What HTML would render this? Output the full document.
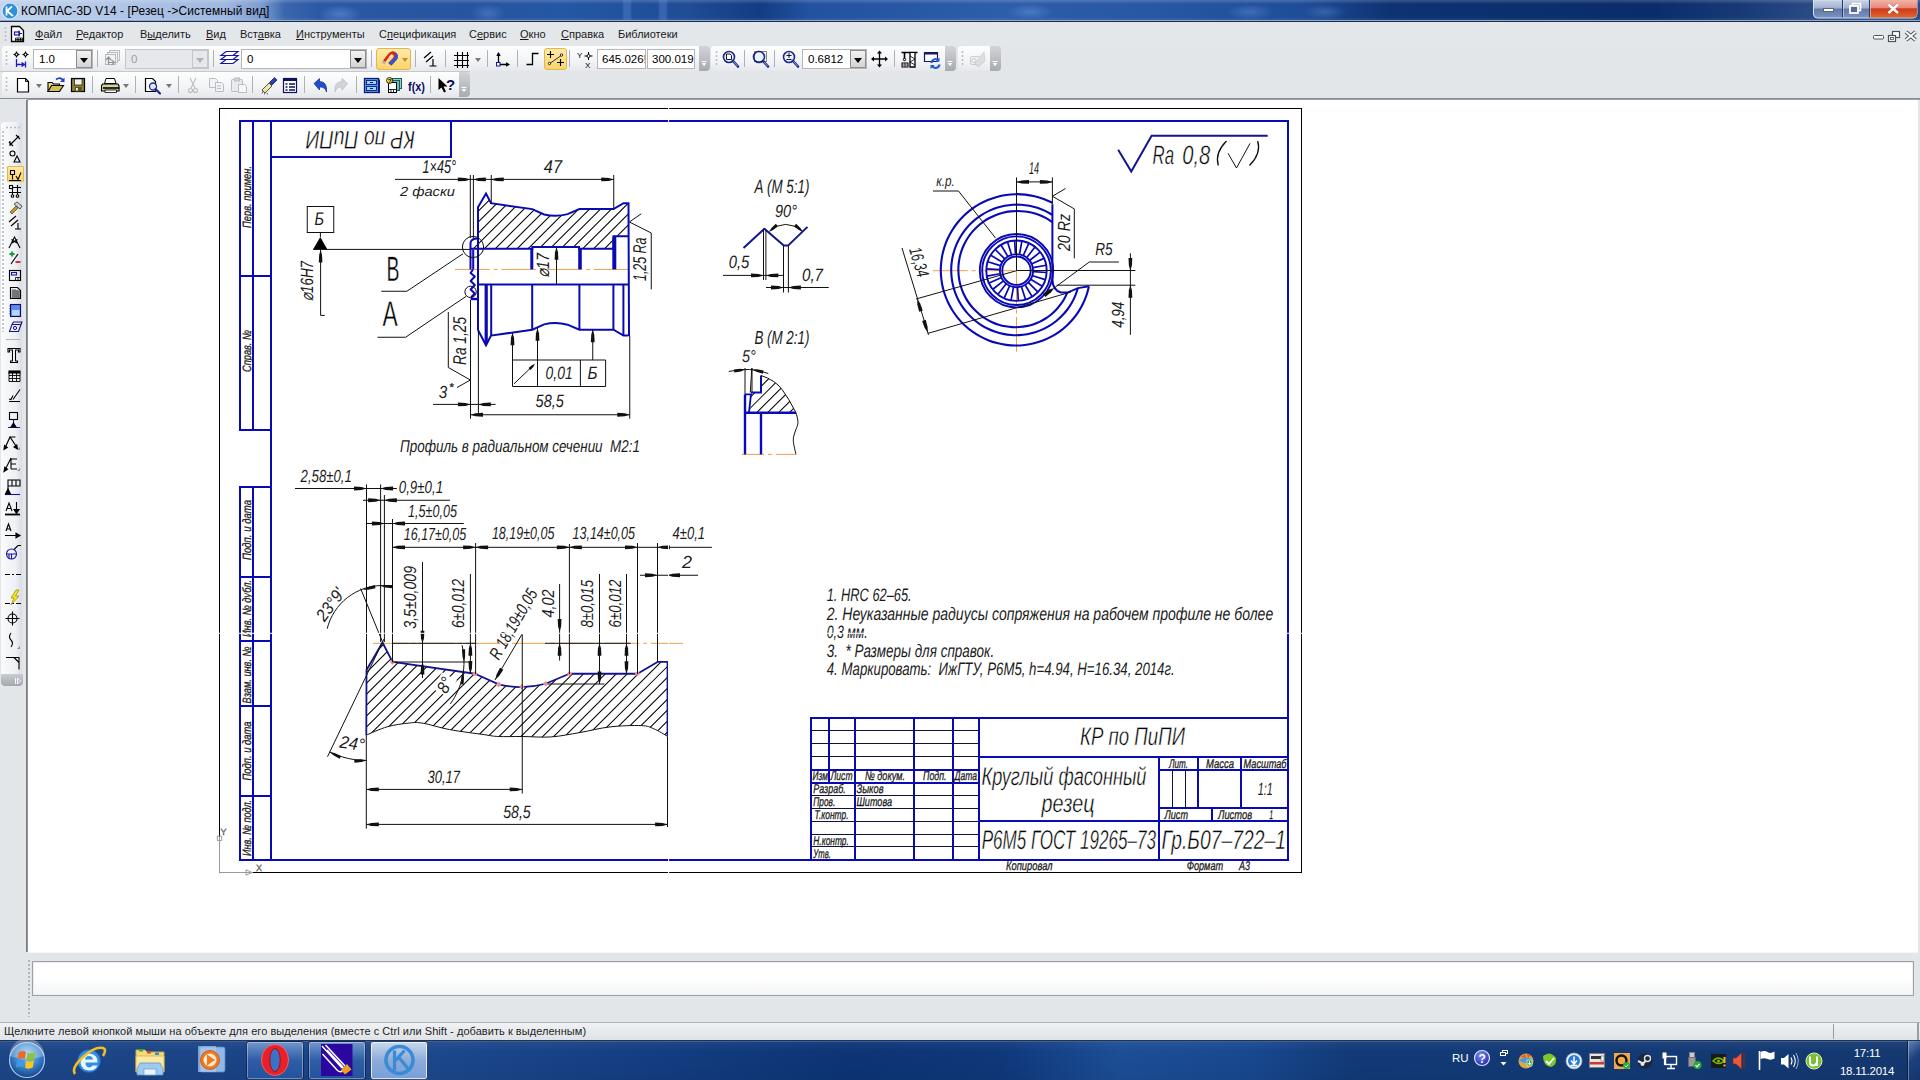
<!DOCTYPE html>
<html><head><meta charset="utf-8"><title>KOMPAS-3D V14</title>
<style>
*{box-sizing:border-box;margin:0;padding:0}
html,body{width:1920px;height:1080px;overflow:hidden;background:#e3e6e9;font-family:"Liberation Sans",sans-serif;font-size:11px;color:#000}
.abs{position:absolute}
#title{left:0;top:0;width:1920px;height:22px;background:linear-gradient(rgba(255,255,255,.18),rgba(255,255,255,0) 4px,rgba(255,255,255,0) 17px,rgba(255,255,255,.12)),linear-gradient(90deg,#c3d3ec 0px,#b4c8e8 100px,#9fb8e0 225px,#7d9cd0 262px,#3a66ad 285px,#2a58a3 320px,#27549f 480px,#2458a4 560px,#1f4c95 690px,#143c82 760px,#2252a0 810px,#2d5ea9 1000px,#2857a3 1150px,#1f4e98 1300px,#0e3272 1390px,#0a2c6a 1650px,#173a77 1740px,#2a4a84 1810px)}
#title:before{content:"";position:absolute;left:0;top:0;width:1920px;height:20px;background:radial-gradient(ellipse 22px 9px at 340px 14px,rgba(120,165,230,.45),transparent),radial-gradient(ellipse 18px 9px at 488px 13px,rgba(120,165,230,.35),transparent),linear-gradient(90deg,transparent 622px,rgba(110,150,220,.3) 624px,rgba(110,150,220,.3) 630px,transparent 632px,transparent 658px,rgba(110,150,220,.3) 660px,rgba(110,150,220,.3) 666px,transparent 668px),radial-gradient(ellipse 24px 8px at 1030px 12px,rgba(120,165,230,.4),transparent),radial-gradient(ellipse 24px 8px at 1250px 12px,rgba(120,165,230,.35),transparent),radial-gradient(ellipse 22px 8px at 1325px 12px,rgba(120,165,230,.3),transparent)}
#title:after{content:"";position:absolute;left:0;top:20px;width:1920px;height:2px;background:linear-gradient(#8fa8d0 50%,#1d2c48 50%)}
#ttext{left:21px;top:4px;font-size:11.9px;color:#000;white-space:nowrap;letter-spacing:0.1px}
#menubar{left:0;top:22px;width:1920px;height:24px;background:#e4e7ea}
.mi{top:28px;font-size:11px;color:#1a1a1a;white-space:nowrap}
.mi u{text-decoration:underline}
.tb{height:25px;background:linear-gradient(#fdfdfe,#f4f5f7 55%,#e6e8ec);border-radius:3px 0 0 3px}
.tbend{width:11px;height:25px;background:linear-gradient(#d2d4d8,#a7aaaf);border-radius:0 4px 4px 0}
.grip{width:3px;height:17px;background-image:radial-gradient(circle,#b9bcc2 0.9px,transparent 1.2px);background-size:3px 4px}
.sep{width:1px;height:17px;background:#aeb1b6}
.combo{height:20px;background:#fff;border:1px solid #b3b6bb;font-size:11.5px;line-height:18px;padding-left:5px;color:#000}
.combo.dis{background:#e6e8eb;color:#9a9da2;border-color:#c4c6ca}
.cbtn{width:16px;height:18px;right:0;top:0;background:linear-gradient(#f2f2f2,#d4d4d4);border:1px solid #8e8e8e}
.cbtn:after{content:"";position:absolute;left:3px;top:7px;border:4px solid transparent;border-top:5px solid #000;border-bottom:0}
.dis .cbtn{background:#e6e8eb;border-color:#c4c6ca}
.dis .cbtn:after{border-top-color:#b0b3b8}
.hl{background:linear-gradient(#fde9a8,#fbd56c);border:1px solid #e2b64e;border-radius:3px}
.dd{width:0;height:0;border:3px solid transparent;border-top:4px solid #777;border-bottom:0}
#left{left:0;top:99px;width:27px;height:851px;background:#e3e6e9}
#leftbar{left:1px;top:122px;width:21px;height:564px;background:linear-gradient(90deg,#fbfbfc,#eef0f3 70%,#d9dce1);border-radius:3px}
#canvas{left:28px;top:100px;width:1890px;height:852px;background:#fff}
#status{left:0;top:1022px;width:1920px;height:18px;background:linear-gradient(#f0f2f4,#dfe3e7);border-top:1px solid #aeb2b8}
#taskbar{left:0;top:1040px;width:1920px;height:40px;background:linear-gradient(rgba(255,255,255,.06),rgba(255,255,255,0) 12px,rgba(0,0,0,.05)),linear-gradient(90deg,#1c4688 0,#1a4488 250px,#1c488c 430px,#143e82 650px,#0c3476 850px,#0f387b 1000px,#1c4e96 1120px,#184890 1250px,#123a78 1350px,#133a76 1600px,#143870 1920px)}
#taskbar:before{content:"";position:absolute;left:0;top:0;width:1920px;height:2px;background:linear-gradient(#0e1f3c,#4d74ad)}
.tbtn{top:1041px;width:58px;height:39px;border-radius:3px;border:1px solid rgba(10,20,50,.7);box-shadow:inset 0 0 0 1px rgba(255,255,255,.35);background:linear-gradient(rgba(140,175,225,.75),rgba(60,110,185,.6) 50%,rgba(40,90,170,.7))}
.tray{color:#fff;font-size:12px}
svg{position:absolute;left:0;top:0;overflow:visible}
</style></head><body>
<div class="abs" id="title"></div>
<div class="abs" id="ttext">КОМПАС-3D V14 - [Резец -&gt;Системный вид]</div>
<div class="abs" id="menubar"></div>
<div class="abs mi" style="left:35px"><u>Ф</u>айл</div>
<div class="abs mi" style="left:76px"><u>Р</u>едактор</div>
<div class="abs mi" style="left:140px">В<u>ы</u>делить</div>
<div class="abs mi" style="left:206px"><u>В</u>ид</div>
<div class="abs mi" style="left:240px">Вст<u>а</u>вка</div>
<div class="abs mi" style="left:296px"><u>И</u>нструменты</div>
<div class="abs mi" style="left:379px">С<u>п</u>ецификация</div>
<div class="abs mi" style="left:469px">С<u>е</u>рвис</div>
<div class="abs mi" style="left:520px"><u>О</u>кно</div>
<div class="abs mi" style="left:561px"><u>С</u>правка</div>
<div class="abs mi" style="left:618px">Библиотеки</div>
<div class="abs grip" style="left:4px;top:26px;height:15px"></div>

<!-- toolbar row 1 -->
<div class="abs tb" style="left:2px;top:46px;width:697px"></div><div class="abs tbend" style="left:699px;top:46px"></div>
<div class="abs tb" style="left:711px;top:46px;width:235px"></div><div class="abs tbend" style="left:945px;top:46px"></div>
<div class="abs tb" style="left:958px;top:46px;width:33px"></div><div class="abs tbend" style="left:990px;top:46px"></div>
<div class="abs" style="left:0;top:71px;width:470px;height:1px;background:#c5c8cc"></div>
<div class="abs grip" style="left:5px;top:50px"></div>
<div class="abs grip" style="left:715px;top:50px"></div>
<div class="abs grip" style="left:961px;top:50px"></div>
<div class="abs combo" style="left:33px;top:49px;width:60px">1.0<div class="abs cbtn"></div></div>
<div class="abs sep" style="left:97px;top:50px"></div>
<div class="abs combo dis" style="left:125px;top:49px;width:84px">0<div class="abs cbtn"></div></div>
<div class="abs sep" style="left:213px;top:50px"></div>
<div class="abs combo" style="left:241px;top:49px;width:126px">0<div class="abs cbtn"></div></div>
<div class="abs sep" style="left:371px;top:50px"></div>
<div class="abs hl" style="left:376px;top:48px;width:35px;height:22px"></div>
<div class="abs dd" style="left:402px;top:58px;border-top-color:#c58a2a"></div>
<div class="abs sep" style="left:415px;top:50px"></div>
<div class="abs sep" style="left:445px;top:50px"></div>
<div class="abs dd" style="left:475px;top:58px"></div>
<div class="abs sep" style="left:487px;top:50px"></div>
<div class="abs sep" style="left:517px;top:50px"></div>
<div class="abs hl" style="left:544px;top:48px;width:23px;height:22px"></div>
<div class="abs sep" style="left:569px;top:50px"></div>
<div class="abs combo" style="left:597px;top:49px;width:49px;padding-left:4px;overflow:hidden">645.026!</div>
<div class="abs combo" style="left:647px;top:49px;width:48px;padding-left:4px">300.019</div>
<div class="abs sep" style="left:744px;top:50px"></div>
<div class="abs sep" style="left:774px;top:50px"></div>
<div class="abs combo" style="left:802px;top:49px;width:65px">0.6812<div class="abs cbtn"></div></div>
<div class="abs sep" style="left:894px;top:50px"></div>

<!-- toolbar row 2 -->
<div class="abs tb" style="left:2px;top:72px;width:457px"></div><div class="abs tbend" style="left:459px;top:72px"></div>
<div class="abs grip" style="left:5px;top:76px"></div>
<div class="abs dd" style="left:36px;top:84px"></div>
<div class="abs sep" style="left:92px;top:76px"></div>
<div class="abs dd" style="left:123px;top:84px"></div>
<div class="abs sep" style="left:135px;top:76px"></div>
<div class="abs dd" style="left:166px;top:84px"></div>
<div class="abs sep" style="left:178px;top:76px"></div>
<div class="abs sep" style="left:252px;top:76px"></div>
<div class="abs sep" style="left:304px;top:76px"></div>
<div class="abs sep" style="left:356px;top:76px"></div>
<div class="abs sep" style="left:430px;top:76px"></div>

<div class="abs" style="left:0;top:98px;width:1920px;height:2px;background:linear-gradient(#7f8286,#a5a8ac)"></div>
<div class="abs" id="left"></div>
<div class="abs" id="leftbar"></div>
<div class="abs" style="left:1px;top:674px;width:22px;height:12px;background:linear-gradient(#c9ccd0,#a4a7ac);border-radius:0 0 4px 4px"></div>
<div class="abs" style="left:5px;top:126px;width:15px;height:3px;background-image:radial-gradient(circle,#b9bcc2 0.9px,transparent 1.2px);background-size:4px 3px"></div>
<div class="abs" style="left:2px;top:130px;width:2px;height:202px;background-image:radial-gradient(circle,#c3c6cb 0.8px,transparent 1.1px);background-size:2px 4px"></div>
<div class="abs hl" style="left:7px;top:166px;width:17px;height:16px;border-radius:1px"></div>
<div class="abs" style="left:6px;top:339px;width:14px;height:1px;background:#aeb1b6"></div>
<div class="abs" style="left:26px;top:100px;width:2px;height:852px;background:linear-gradient(90deg,#6e7175,#9a9da1)"></div>
<div class="abs" id="canvas"></div>
<div class="abs" style="left:28px;top:952px;width:1890px;height:1px;background:#f4f5f6"></div>
<!-- property panel -->
<div class="abs" style="left:28px;top:959px;width:2px;height:58px;background-image:radial-gradient(circle,#b4b7bc 0.9px,transparent 1.2px);background-size:2px 4px"></div>
<div class="abs" style="left:32px;top:961px;width:1882px;height:35px;border:1px solid #9da1a7;box-shadow:inset 0 0 0 1px #eceef1;background:linear-gradient(#fff,#fff 50%,#f2f4f6)"></div>
<div class="abs" id="status"></div>
<div class="abs" style="left:4px;top:1025px;font-size:11px;color:#1e1e1e;white-space:nowrap;letter-spacing:0.05px" id="sttext">Щелкните левой кнопкой мыши на объекте для его выделения (вместе с Ctrl или Shift - добавить к выделенным)</div>
<div class="abs" style="left:1833px;top:1024px;width:1px;height:15px;background:#9a9ea4"></div>
<div class="abs" style="left:1917px;top:1023px;width:2px;height:17px;background:#9a9ea4"></div>
<!-- taskbar -->
<div class="abs" id="taskbar"></div>
<div class="abs tbtn" style="left:246px"></div>
<div class="abs tbtn" style="left:308px"></div>
<div class="abs tbtn" style="left:370px;background:linear-gradient(rgba(215,228,245,.92),rgba(160,190,230,.85) 50%,rgba(130,170,225,.9));box-shadow:inset 0 0 0 1px rgba(255,255,255,.7)"></div>
<div class="abs" style="left:1907px;top:1041px;width:13px;height:39px;border-left:1px solid #0c1f44;background:linear-gradient(135deg,rgba(160,185,225,.55),rgba(40,80,150,.4) 45%,rgba(20,50,110,.5));box-shadow:inset 1px 0 0 rgba(255,255,255,.35)"></div>
<div class="abs tray" style="left:1452px;top:1051.5px;font-size:11.5px">RU</div>
<div class="abs tray" style="left:1834px;top:1045px;width:66px;text-align:center;font-size:11.5px;line-height:17.5px;letter-spacing:-0.25px">17:11<br>18.11.2014</div>
<svg width="1920" height="1080" viewBox="0 0 1920 1080" id="sheet" text-rendering="geometricPrecision">
<rect x="219.5" y="108.5" width="1082" height="764" fill="#fff" stroke="#000" stroke-width="1"/>
<g stroke="#0a0ab4" stroke-width="2" fill="none" stroke-linecap="square">
<rect x="271" y="121" width="1017" height="739"/>
<path d="M240 121L271 121"/>
<path d="M240 276L271 276"/>
<path d="M240 430L271 430"/>
<path d="M240 121L240 430"/>
<path d="M253 121L253 430"/>
<path d="M240 487L271 487"/>
<path d="M240 577L271 577"/>
<path d="M240 641L271 641"/>
<path d="M240 706L271 706"/>
<path d="M240 796L271 796"/>
<path d="M240 860L271 860"/>
<path d="M240 487L240 860"/>
<path d="M253 487L253 860"/>
<path d="M451 121L451 157"/>
<path d="M271 157L451 157"/>
<path d="M811 718L1288 718"/>
<path d="M811 718L811 860"/>
<path d="M855 718L855 860"/>
<path d="M914 718L914 860"/>
<path d="M953 718L953 860"/>
<path d="M979 718L979 860"/>
<path d="M829 718L829 783"/>
<path d="M811 770L979 770"/>
<path d="M811 783L979 783"/>
<path d="M979 757L1288 757"/>
<path d="M979 821L1288 821"/>
<path d="M1159 757L1159 860"/>
<path d="M1159 770L1288 770"/>
<path d="M1159 808L1288 808"/>
<path d="M1198 757L1198 808"/>
<path d="M1241 757L1241 808"/>
<path d="M1212 808L1212 821"/>
</g>
<g stroke="#10103c" stroke-width="1" fill="none">
<path d="M811.5 730.5L978.5 730.5"/>
<path d="M811.5 743.5L978.5 743.5"/>
<path d="M811.5 756.5L978.5 756.5"/>
<path d="M811.5 795.5L978.5 795.5"/>
<path d="M811.5 808.5L978.5 808.5"/>
<path d="M811.5 821.5L978.5 821.5"/>
<path d="M811.5 834.5L978.5 834.5"/>
<path d="M811.5 846.5L978.5 846.5"/>
<path d="M1172.5 769.5L1172.5 808.5"/>
<path d="M1185.5 769.5L1185.5 808.5"/>
</g>
<g font-family="Liberation Sans" font-style="italic">
<text x="250.6" y="228" font-size="12.14" fill="#1c1c1c" font-style="italic" stroke="#1c1c1c" stroke-width="0.3" textLength="62" lengthAdjust="spacingAndGlyphs" transform="rotate(-90 250.6 228)">Перв. примен.</text>
<text x="250.6" y="372" font-size="12.14" fill="#1c1c1c" font-style="italic" stroke="#1c1c1c" stroke-width="0.3" textLength="42" lengthAdjust="spacingAndGlyphs" transform="rotate(-90 250.6 372)">Справ. №</text>
<text x="250.6" y="560" font-size="12.14" fill="#1c1c1c" font-style="italic" stroke="#1c1c1c" stroke-width="0.3" textLength="60" lengthAdjust="spacingAndGlyphs" transform="rotate(-90 250.6 560)">Подп. и дата</text>
<text x="250.6" y="637" font-size="12.14" fill="#1c1c1c" font-style="italic" stroke="#1c1c1c" stroke-width="0.3" textLength="57" lengthAdjust="spacingAndGlyphs" transform="rotate(-90 250.6 637)">Инв. № дубл.</text>
<text x="250.6" y="703.5" font-size="12.14" fill="#1c1c1c" font-style="italic" stroke="#1c1c1c" stroke-width="0.3" textLength="57" lengthAdjust="spacingAndGlyphs" transform="rotate(-90 250.6 703.5)">Взам. инв. №</text>
<text x="250.6" y="780.5" font-size="12.14" fill="#1c1c1c" font-style="italic" stroke="#1c1c1c" stroke-width="0.3" textLength="59" lengthAdjust="spacingAndGlyphs" transform="rotate(-90 250.6 780.5)">Подп. и дата</text>
<text x="250.6" y="856" font-size="12.14" fill="#1c1c1c" font-style="italic" stroke="#1c1c1c" stroke-width="0.3" textLength="56" lengthAdjust="spacingAndGlyphs" transform="rotate(-90 250.6 856)">Инв. № подл.</text>
<text x="415" y="130.5" font-size="25.71" fill="#000" font-style="italic" stroke="#fff" stroke-width="0.45" textLength="109" lengthAdjust="spacingAndGlyphs" transform="rotate(180 415 130.5)">КР по ПиПИ</text>
<text x="1080" y="745.4" font-size="25.71" fill="#000" font-style="italic" stroke="#fff" stroke-width="0.45" textLength="105" lengthAdjust="spacingAndGlyphs">КР по ПиПИ</text>
<text x="981.5" y="784.8" font-size="25.71" fill="#000" font-style="italic" stroke="#fff" stroke-width="0.45" textLength="165" lengthAdjust="spacingAndGlyphs">Круглый фасонный</text>
<text x="1041.5" y="811.5" font-size="25.71" fill="#000" font-style="italic" stroke="#fff" stroke-width="0.45" textLength="53" lengthAdjust="spacingAndGlyphs">резец</text>
<text x="981.7" y="848.5" font-size="27.14" fill="#000" font-style="italic" stroke="#fff" stroke-width="0.45" textLength="174.3" lengthAdjust="spacingAndGlyphs">Р6М5 ГОСТ 19265–73</text>
<text x="1161.5" y="848.5" font-size="27.14" fill="#000" font-style="italic" stroke="#fff" stroke-width="0.45" textLength="124.5" lengthAdjust="spacingAndGlyphs">Гр.Б07–722–1</text>
<text x="1257.8" y="794.6" font-size="17.86" fill="#1c1c1c" font-style="italic" textLength="15" lengthAdjust="spacingAndGlyphs">1:1</text>
<text x="1169" y="767.6" font-size="12.57" fill="#1c1c1c" font-style="italic" stroke="#1c1c1c" stroke-width="0.3" textLength="19" lengthAdjust="spacingAndGlyphs">Лит.</text>
<text x="1206" y="767.6" font-size="12.57" fill="#1c1c1c" font-style="italic" stroke="#1c1c1c" stroke-width="0.3" textLength="28" lengthAdjust="spacingAndGlyphs">Масса</text>
<text x="1243.5" y="767.6" font-size="12.57" fill="#1c1c1c" font-style="italic" stroke="#1c1c1c" stroke-width="0.3" textLength="43" lengthAdjust="spacingAndGlyphs">Масштаб</text>
<text x="1164.5" y="819" font-size="12.57" fill="#1c1c1c" font-style="italic" stroke="#1c1c1c" stroke-width="0.3" textLength="23.5" lengthAdjust="spacingAndGlyphs">Лист</text>
<text x="1218" y="819" font-size="12.57" fill="#1c1c1c" font-style="italic" stroke="#1c1c1c" stroke-width="0.3" textLength="34" lengthAdjust="spacingAndGlyphs">Листов</text>
<text x="1269.5" y="819" font-size="12.57" fill="#1c1c1c" font-style="italic" stroke="#1c1c1c" stroke-width="0.3" textLength="3.5" lengthAdjust="spacingAndGlyphs">1</text>
<text x="812.5" y="780.3" font-size="12.57" fill="#1c1c1c" font-style="italic" stroke="#1c1c1c" stroke-width="0.3" textLength="15.5" lengthAdjust="spacingAndGlyphs">Изм</text>
<text x="830.5" y="780.3" font-size="12.57" fill="#1c1c1c" font-style="italic" stroke="#1c1c1c" stroke-width="0.3" textLength="22" lengthAdjust="spacingAndGlyphs">Лист</text>
<text x="865" y="780.3" font-size="12.57" fill="#1c1c1c" font-style="italic" stroke="#1c1c1c" stroke-width="0.3" textLength="40" lengthAdjust="spacingAndGlyphs">№ докум.</text>
<text x="923" y="780.3" font-size="12.57" fill="#1c1c1c" font-style="italic" stroke="#1c1c1c" stroke-width="0.3" textLength="23.5" lengthAdjust="spacingAndGlyphs">Подп.</text>
<text x="954.5" y="780.3" font-size="12.57" fill="#1c1c1c" font-style="italic" stroke="#1c1c1c" stroke-width="0.3" textLength="22.5" lengthAdjust="spacingAndGlyphs">Дата</text>
<text x="813.3" y="793" font-size="12.57" fill="#1c1c1c" font-style="italic" stroke="#1c1c1c" stroke-width="0.3" textLength="32.5" lengthAdjust="spacingAndGlyphs">Разраб.</text>
<text x="856.5" y="793" font-size="12.57" fill="#1c1c1c" font-style="italic" stroke="#1c1c1c" stroke-width="0.3" textLength="27" lengthAdjust="spacingAndGlyphs">Зыков</text>
<text x="813.3" y="805.8" font-size="12.57" fill="#1c1c1c" font-style="italic" stroke="#1c1c1c" stroke-width="0.3" textLength="22" lengthAdjust="spacingAndGlyphs">Пров.</text>
<text x="856.5" y="805.8" font-size="12.57" fill="#1c1c1c" font-style="italic" stroke="#1c1c1c" stroke-width="0.3" textLength="35.5" lengthAdjust="spacingAndGlyphs">Шитова</text>
<text x="814.5" y="818.8" font-size="12.57" fill="#1c1c1c" font-style="italic" stroke="#1c1c1c" stroke-width="0.3" textLength="34" lengthAdjust="spacingAndGlyphs">Т.контр.</text>
<text x="813.3" y="844.8" font-size="12.57" fill="#1c1c1c" font-style="italic" stroke="#1c1c1c" stroke-width="0.3" textLength="35.5" lengthAdjust="spacingAndGlyphs">Н.контр.</text>
<text x="813.3" y="857.5" font-size="12.57" fill="#1c1c1c" font-style="italic" stroke="#1c1c1c" stroke-width="0.3" textLength="17.5" lengthAdjust="spacingAndGlyphs">Утв.</text>
<text x="1006" y="870.2" font-size="12.57" fill="#1c1c1c" font-style="italic" stroke="#1c1c1c" stroke-width="0.3" textLength="46.5" lengthAdjust="spacingAndGlyphs">Копировал</text>
<text x="1186.7" y="870.2" font-size="12.57" fill="#1c1c1c" font-style="italic" stroke="#1c1c1c" stroke-width="0.3" textLength="36.5" lengthAdjust="spacingAndGlyphs">Формат</text>
<text x="1239" y="870.2" font-size="12.57" fill="#1c1c1c" font-style="italic" stroke="#1c1c1c" stroke-width="0.3" textLength="11" lengthAdjust="spacingAndGlyphs">А3</text>
<text x="826.7" y="601" font-size="18" fill="#1c1c1c" font-style="italic" textLength="85" lengthAdjust="spacingAndGlyphs">1. HRC 62–65.</text>
<text x="826.7" y="619.6" font-size="18" fill="#1c1c1c" font-style="italic" textLength="446.5" lengthAdjust="spacingAndGlyphs">2. Неуказанные радиусы сопряжения на рабочем профиле не более</text>
<text x="826.7" y="638" font-size="18" fill="#1c1c1c" font-style="italic" textLength="41" lengthAdjust="spacingAndGlyphs">0,3 мм.</text>
<text x="826.7" y="656.5" font-size="18" fill="#1c1c1c" font-style="italic" textLength="167.5" lengthAdjust="spacingAndGlyphs">3.  * Размеры для справок.</text>
<text x="826.7" y="675" font-size="18" fill="#1c1c1c" font-style="italic" textLength="348" lengthAdjust="spacingAndGlyphs">4. Маркировать:  ИжГТУ, Р6М5, h=4.94, H=16.34, 2014г.</text>
</g>
<g font-family="Liberation Sans" font-style="italic" fill="none">
<clipPath id="hc1"><path d="M478 248.75L478 207.25L486 193.5L491 203.2L532.25 209.12L544.12 214.45A46.85 46.85 0 0 0 567.55 214.12L579.45 209.12L613.5 209.12L623.5 203.2L628.5 203.2L629 236.25L613.5 236.25L613.5 248.75L579 248.75L579 246.9L532.3 246.9L532.3 248.75z M470.5 249.5L470.5 243L473.5 239L478 238.5L478 249.5z"/></clipPath>
<g clip-path="url(#hc1)" stroke="#000" stroke-width="1.05">
<path d="M465 180.7L632 13.7M465 191.62L632 24.62M465 202.55L632 35.55M465 213.47L632 46.47M465 224.4L632 57.4M465 235.32L632 68.32M465 246.25L632 79.25M465 257.17L632 90.17M465 268.1L632 101.1M465 279.02L632 112.02M465 289.95L632 122.95M465 300.87L632 133.87M465 311.8L632 144.8M465 322.72L632 155.72M465 333.65L632 166.65M465 344.57L632 177.57M465 355.5L632 188.5M465 366.42L632 199.42M465 377.35L632 210.35M465 388.27L632 221.27M465 399.2L632 232.2M465 410.12L632 243.12"/></g>
<path d="M455 269.4L632 269.4" stroke="#e8a04a" stroke-width="1" stroke-dasharray="34.7 4 4 3.6"/>
<path d="M478 248.75L478 207.25L486 193.5L491 203.2L532.25 209.12L544.12 214.45A46.85 46.85 0 0 0 567.55 214.12L579.45 209.12L613.5 209.12L623.5 203.2L628.5 203.2L629 336" stroke="#0a0ab4" stroke-width="2" fill="none" stroke-linejoin="miter"/>
<path d="M470.5 248.75L532.3 248.75L532.3 246.9L579 246.9L579 248.75L613.5 248.75L613.5 236.25L629 236.25" stroke="#0a0ab4" stroke-width="2" fill="none" />
<path d="M478 207V330" stroke="#0a0ab4" stroke-width="2" fill="none" />
<path d="M478 284.4H629" stroke="#0a0ab4" stroke-width="2" fill="none" />
<path d="M531.8 248V269.4" stroke="#0a0ab4" stroke-width="3" fill="none" />
<path d="M580 248V269.4" stroke="#0a0ab4" stroke-width="3.6" fill="none" />
<path d="M614.3 237V269.4" stroke="#0a0ab4" stroke-width="4" fill="none" />
<path d="M470.5 269.4V243Q471 239.5 475 238.8L478 238.5" stroke="#0a0ab4" stroke-width="2" fill="none" />
<path d="M473.2 250V269.4" stroke="#0a0ab4" stroke-width="2" fill="none" />
<path d="M473 269.5L470.6 273L474.8 276.5L470.6 281L474.8 285L470.6 289.5L474.8 293.5L471 297.5" stroke="#0a0ab4" stroke-width="2" fill="none" stroke-linejoin="round"/>
<path d="M470.6 299H478" stroke="#0a0ab4" stroke-width="2.4" fill="none" />
<path d="M478 330L486 345.3L491 335.6L532.25 329.67L544.12 324.35A46.85 46.85 0 0 1 567.55 324.67L579.45 329.67L613.5 329.67L623.5 335.6L628.5 335.6" stroke="#0a0ab4" stroke-width="2" fill="none" stroke-linejoin="miter"/>
<path d="M486.2 284.4V344" stroke="#0a0ab4" stroke-width="3.2" fill="none" />
<path d="M491.2 284.4V335.600" stroke="#0a0ab4" stroke-width="2" fill="none" />
<path d="M532.2 284.4V329.700" stroke="#0a0ab4" stroke-width="2" fill="none" />
<path d="M579.4 284.4V329.700" stroke="#0a0ab4" stroke-width="2" fill="none" />
<path d="M613.4 284.4V329.700" stroke="#0a0ab4" stroke-width="2" fill="none" />
<path d="M623.4 284.4V335.600" stroke="#0a0ab4" stroke-width="2" fill="none" />
<circle cx="473" cy="247" r="10.6" stroke="#111"/><circle cx="470.6" cy="291.9" r="5.7" stroke="#111"/>
<path d="M395 179.4L613.75 179.4" stroke="#111" stroke-width="1" />
<path d="M470.3 175L470.3 238" stroke="#111" stroke-width="1" />
<path d="M473.4 175L473.4 238" stroke="#111" stroke-width="1" />
<path d="M491.25 175L491.25 204" stroke="#111" stroke-width="1" />
<path d="M613.75 175L613.75 209" stroke="#111" stroke-width="1" />
<path d="M470.3 179.4L465.3 177.88L457.8 177.5L457.8 181.3L465.3 180.92z" stroke="none" stroke-width="0" fill="#111" />
<path d="M473.4 179.4L478.4 180.92L485.9 181.3L485.9 177.5L478.4 177.88z" stroke="none" stroke-width="0" fill="#111" />
<path d="M491.25 179.4L496.25 180.92L503.75 181.3L503.75 177.5L496.25 177.88z" stroke="none" stroke-width="0" fill="#111" />
<path d="M613.75 179.4L608.75 177.88L601.25 177.5L601.25 181.3L608.75 180.92z" stroke="none" stroke-width="0" fill="#111" />
<text x="422.5" y="173" font-size="18.57" fill="#1c1c1c" font-style="italic" textLength="33.5" lengthAdjust="spacingAndGlyphs">1×45°</text>
<text x="400" y="196.2" font-size="13.29" fill="#1c1c1c" font-style="italic" textLength="55" lengthAdjust="spacingAndGlyphs">2 фаски</text>
<text x="543.8" y="173" font-size="18.57" fill="#1c1c1c" font-style="italic" textLength="18.2" lengthAdjust="spacingAndGlyphs">47</text>
<rect x="307.25" y="206.5" width="26.5" height="26" stroke="#111"/>
<text x="314.5" y="225.3" font-size="18.29" fill="#1c1c1c" font-style="italic" textLength="9.5" lengthAdjust="spacingAndGlyphs">Б</text>
<path d="M320.4 232.5L320.4 237" stroke="#111" stroke-width="1" />
<path d="M320.3 236.9L313 249.4L327.4 249.4z" stroke="none" stroke-width="0" fill="#000" />
<path d="M313 249.4L470 249.4" stroke="#111" stroke-width="1" />
<path d="M320.6 249.4V315.4H324.8" stroke="#111" stroke-width="1" fill="none" />
<path d="M320.6 250L319.16 255L318.8 262.5L322.4 262.5L322.04 255z" stroke="none" stroke-width="0" fill="#111" />
<text x="313" y="301" font-size="17.86" fill="#1c1c1c" font-style="italic" textLength="40" lengthAdjust="spacingAndGlyphs" transform="rotate(-90 313 301)">⌀16H7</text>
<text x="386.6" y="280.6" font-size="35.24" fill="#000" font-style="normal" stroke="#fff" stroke-width="0.45" textLength="13" lengthAdjust="spacingAndGlyphs">В</text>
<text x="382.6" y="326" font-size="35.52" fill="#000" font-style="normal" stroke="#fff" stroke-width="0.45" textLength="15.2" lengthAdjust="spacingAndGlyphs">А</text>
<path d="M463 253.75L406.9 291.25H381.25" stroke="#111" stroke-width="1" fill="none" />
<path d="M466.25 296.25L405.6 337.25H377.5" stroke="#111" stroke-width="1" fill="none" />
<path d="M556.5 247.5L556.5 284.4" stroke="#111" stroke-width="1" />
<path d="M556.5 247.3L554.98 252.3L554.6 259.8L558.4 259.8L558.02 252.3z" stroke="none" stroke-width="0" fill="#111" />
<text x="549" y="277.5" font-size="17.86" fill="#1c1c1c" font-style="italic" textLength="24.5" lengthAdjust="spacingAndGlyphs" transform="rotate(-90 549 277.5)">⌀17</text>
<path d="M641.25 213.75L629.4 222L651.25 233V289.4" stroke="#111" stroke-width="1" fill="none" />
<text x="646" y="281" font-size="18.57" fill="#1c1c1c" font-style="italic" textLength="43.5" lengthAdjust="spacingAndGlyphs" transform="rotate(-90 646 281)">1,25 Ra</text>
<path d="M470.5 300L470.5 418.75" stroke="#111" stroke-width="1" />
<path d="M478.4 331L478.4 413" stroke="#111" stroke-width="1" />
<path d="M629.75 336L629.75 418.75" stroke="#111" stroke-width="1" />
<path d="M433 404.4L495.6 404.4" stroke="#111" stroke-width="1" />
<path d="M470.5 404.4L465.5 402.88L458 402.5L458 406.3L465.5 405.92z" stroke="none" stroke-width="0" fill="#111" />
<path d="M478.4 404.4L483.4 405.92L490.9 406.3L490.9 402.5L483.4 402.88z" stroke="none" stroke-width="0" fill="#111" />
<path d="M470.5 414.75L629.75 414.75" stroke="#111" stroke-width="1" />
<path d="M470.5 414.75L475.5 416.27L483 416.65L483 412.85L475.5 413.23z" stroke="none" stroke-width="0" fill="#111" />
<path d="M629.75 414.75L624.75 413.23L617.25 412.85L617.25 416.65L624.75 416.27z" stroke="none" stroke-width="0" fill="#111" />
<text x="535.6" y="406.9" font-size="17.86" fill="#1c1c1c" font-style="italic" textLength="28.2" lengthAdjust="spacingAndGlyphs">58,5</text>
<text x="438.75" y="397.75" font-size="17.43" fill="#1c1c1c" font-style="italic" textLength="8.5" lengthAdjust="spacingAndGlyphs">3</text>
<text x="449" y="391" font-size="11.43" fill="#1c1c1c" font-style="italic" stroke="#1c1c1c" stroke-width="0.3" textLength="4.5" lengthAdjust="spacingAndGlyphs">*</text>
<path d="M448.3 312V367.5L470.4 380L457 387.5" stroke="#111" stroke-width="1" fill="none" />
<text x="466" y="365" font-size="18.57" fill="#1c1c1c" font-style="italic" textLength="48" lengthAdjust="spacingAndGlyphs" transform="rotate(-90 466 365)">Ra 1,25</text>
<path d="M512.5 360H605.6V386.5H512.5zM537.5 360V386.5M580.4 360V386.5" stroke="#111"/>
<path d="M514 383.75L534.4 364.4" stroke="#111" stroke-width="1" />
<path d="M534.6 364.2L531.8 365.31L528.56 368L530.49 370.03L533.34 366.94z" stroke="none" stroke-width="0" fill="#111" />
<text x="545.6" y="379.4" font-size="17.86" fill="#1c1c1c" font-style="italic" textLength="27" lengthAdjust="spacingAndGlyphs">0,01</text>
<text x="587.5" y="379.4" font-size="17.86" fill="#1c1c1c" font-style="italic" textLength="10" lengthAdjust="spacingAndGlyphs">Б</text>
<path d="M512.5 332.75L512.5 360" stroke="#111" stroke-width="1" />
<path d="M512.5 332.75L510.98 337.75L510.6 345.25L514.4 345.25L514.02 337.75z" stroke="none" stroke-width="0" fill="#111" />
<path d="M537.5 328.2L537.5 360" stroke="#111" stroke-width="1" />
<path d="M537.5 328.2L535.98 333.2L535.6 340.7L539.4 340.7L539.02 333.2z" stroke="none" stroke-width="0" fill="#111" />
<path d="M592.75 329.7L592.75 360" stroke="#111" stroke-width="1" />
<path d="M592.75 329.7L591.23 334.7L590.85 342.2L594.65 342.2L594.27 334.7z" stroke="none" stroke-width="0" fill="#111" />
<text x="400" y="451.9" font-size="17.14" fill="#1c1c1c" font-style="italic" textLength="240" lengthAdjust="spacingAndGlyphs">Профиль в радиальном сечении  М2:1</text>
<text x="754.4" y="193" font-size="19.14" fill="#1c1c1c" font-style="italic" textLength="55" lengthAdjust="spacingAndGlyphs">А (М 5:1)</text>
<text x="775" y="217" font-size="17.57" fill="#1c1c1c" font-style="italic" textLength="22" lengthAdjust="spacingAndGlyphs">90°</text>
<path d="M743.5 248L764.4 228.75L783.75 245.6H788L807.5 226.9" stroke="#14148c" stroke-width="2" fill="none" stroke-linejoin="round"/>
<path d="M763.5 229.5L763.5 280" stroke="#111" stroke-width="1" />
<path d="M765.9 230L765.9 280" stroke="#111" stroke-width="1" />
<path d="M783.5 246L783.5 292.5" stroke="#111" stroke-width="1" />
<path d="M788.4 246L788.4 292.5" stroke="#111" stroke-width="1" />
<path d="M723 275.4L783.5 275.4" stroke="#111" stroke-width="1" />
<path d="M763.5 275.4L758.5 273.88L751 273.5L751 277.3L758.5 276.92z" stroke="none" stroke-width="0" fill="#111" />
<path d="M765.9 275.4L770.9 276.92L778.4 277.3L778.4 273.5L770.9 273.88z" stroke="none" stroke-width="0" fill="#111" />
<path d="M766 287.5L828.75 287.5" stroke="#111" stroke-width="1" />
<path d="M783.5 287.5L778.5 285.98L771 285.6L771 289.4L778.5 289.02z" stroke="none" stroke-width="0" fill="#111" />
<path d="M788.4 287.5L793.4 289.02L800.9 289.4L800.9 285.6L793.4 285.98z" stroke="none" stroke-width="0" fill="#111" />
<text x="728.75" y="267.5" font-size="17.86" fill="#1c1c1c" font-style="italic" textLength="20.6" lengthAdjust="spacingAndGlyphs">0,5</text>
<text x="802" y="280.6" font-size="17.86" fill="#1c1c1c" font-style="italic" textLength="21" lengthAdjust="spacingAndGlyphs">0,7</text>
<path d="M769.4 231.25Q785.5 217.500 802.5 231.25" stroke="#111" stroke-width="1" fill="none" />
<path d="M769.2 231.5L773.09 229.91L777.89 226.3L775.83 223.85L771.44 227.95z" stroke="none" stroke-width="0" fill="#111" />
<path d="M802.7 231.5L800.46 227.95L796.07 223.85L794.01 226.3L798.81 229.91z" stroke="none" stroke-width="0" fill="#111" />
<text x="754.4" y="343.6" font-size="18.86" fill="#1c1c1c" font-style="italic" textLength="55" lengthAdjust="spacingAndGlyphs">В (М 2:1)</text>
<text x="742" y="362.4" font-size="17.14" fill="#1c1c1c" font-style="italic" textLength="13.8" lengthAdjust="spacingAndGlyphs">5°</text>
<clipPath id="hc2"><path d="M748.9 412.8L751 394.3L751 392.5L761 392.5L761 375.5Q775 380 782 389.4T796 412.8z"/></clipPath>
<g clip-path="url(#hc2)" stroke="#000" stroke-width="1.05">
<path d="M745 369.67L800 314.67M745 380.6L800 325.6M745 391.52L800 336.52M745 402.45L800 347.45M745 413.37L800 358.37M745 424.3L800 369.3M745 435.22L800 380.22M745 446.15L800 391.15M745 457.07L800 402.07M745 468L800 413"/></g>
<path d="M761 375.5Q775 380 782 389.4T796 412.8" stroke="#111" stroke-width="1" fill="none" />
<path d="M796 412.8C796.33 414.47 798.17 419.6 798 422.8C797.83 426 795.78 429 795 432C794.22 435 793.13 437.07 793.3 440.8C793.47 444.53 795.55 452.13 796 454.4" stroke="#111" stroke-width="1" fill="none" />
<path d="M742 454.4L796 454.4" stroke="#e8a04a" stroke-width="1" stroke-dasharray="22 4 4 4"/>
<path d="M745 394.3V454.4" stroke="#0a0ab4" stroke-width="2.4" fill="none" />
<path d="M745 412.8H796" stroke="#0a0ab4" stroke-width="2.4" fill="none" />
<path d="M761 375.5V392.5H751" stroke="#0a0ab4" stroke-width="2" fill="none" />
<path d="M761 412.8V454.4" stroke="#0a0ab4" stroke-width="2.4" fill="none" />
<path d="M745 394.3H751L748.9 412.8" stroke="#0a0ab4" stroke-width="1.8" fill="none" />
<path d="M745 368L745 394" stroke="#111" stroke-width="1" />
<path d="M752 368L752 392" stroke="#111" stroke-width="1" />
<path d="M751.8 368L750.3 392.5" stroke="#111" stroke-width="1" />
<path d="M728.75 371.500Q750 366.500 768.3 373.500" stroke="#111" stroke-width="1" fill="none" />
<path d="M745 369.5L740.46 368.84L733.88 369.45L734.33 372.62L740.82 371.38z" stroke="none" stroke-width="0" fill="#111" />
<path d="M752.5 369.5L756.46 371.81L762.79 373.71L763.56 370.61L757.08 369.32z" stroke="none" stroke-width="0" fill="#111" />
<path d="M933 270.7L1016.5 270.7" stroke="#e8a04a" stroke-width="1" stroke-dasharray="34.7 4 4 3.6"/>
<path d="M1016.5 270.7L1016.5 353" stroke="#e8a04a" stroke-width="1" stroke-dasharray="34.7 4 4 3.6"/>
<path d="M1052.44 202.83C1050.98 202.18 1046.68 200.05 1043.7 198.95C1040.71 197.84 1037.64 196.92 1034.55 196.19C1031.45 195.46 1028.29 194.93 1025.13 194.59C1021.98 194.26 1018.78 194.12 1015.61 194.18C1012.43 194.23 1009.24 194.49 1006.11 194.95C1002.97 195.4 999.84 196.05 996.79 196.89C993.73 197.73 990.71 198.77 987.79 199.98C984.86 201.19 982 202.59 979.25 204.16C976.5 205.72 973.83 207.47 971.3 209.36C968.78 211.25 966.35 213.31 964.07 215.5C961.8 217.69 959.65 220.04 957.67 222.49C955.69 224.95 953.85 227.54 952.19 230.22C950.53 232.9 949.03 235.7 947.72 238.56C946.41 241.42 945.26 244.38 944.32 247.38C943.37 250.38 942.61 253.46 942.05 256.55C941.48 259.64 941.11 262.79 940.93 265.92C940.76 269.05 940.78 272.22 940.99 275.35C941.21 278.48 941.62 281.61 942.22 284.69C942.82 287.76 943.62 290.82 944.6 293.79C945.58 296.77 946.75 299.7 948.09 302.53C949.43 305.35 950.96 308.11 952.64 310.75C954.32 313.38 956.17 315.93 958.16 318.34C960.16 320.74 962.31 323.04 964.59 325.17C966.86 327.31 969.28 329.31 971.8 331.15C974.32 332.98 976.97 334.67 979.7 336.18C982.42 337.69 985.26 339.03 988.15 340.18C991.04 341.34 994.02 342.32 997.03 343.1C1000.03 343.89 1003.11 344.49 1006.19 344.9C1009.27 345.3 1012.4 345.52 1015.5 345.54C1018.6 345.56 1021.73 345.38 1024.8 345.01C1027.88 344.65 1030.96 344.08 1033.96 343.34C1036.97 342.59 1039.95 341.65 1042.83 340.54C1045.72 339.43 1048.56 338.13 1051.28 336.66C1054.01 335.2 1056.66 333.56 1059.18 331.77C1061.69 329.98 1064.12 328.03 1066.39 325.94C1068.67 323.86 1070.83 321.61 1072.82 319.27C1074.82 316.92 1076.68 314.42 1078.37 311.85C1080.06 309.27 1081.59 306.57 1082.94 303.81C1084.3 301.04 1085.48 298.17 1086.48 295.27C1087.48 292.36 1088.52 287.84 1088.93 286.36" stroke="#0a0ab4" stroke-width="2.1" fill="none" />
<path d="M1052.37 214.82C1051.16 214.16 1047.59 212.01 1045.09 210.84C1042.59 209.67 1039.99 208.65 1037.37 207.8C1034.74 206.95 1032.05 206.27 1029.34 205.75C1026.63 205.24 1023.87 204.89 1021.13 204.72C1018.38 204.55 1015.6 204.55 1012.85 204.73C1010.11 204.9 1007.36 205.25 1004.66 205.76C1001.96 206.27 999.27 206.96 996.66 207.81C994.05 208.66 991.47 209.67 988.99 210.84C986.51 212 984.08 213.33 981.77 214.8C979.45 216.26 977.21 217.88 975.1 219.62C972.99 221.36 970.97 223.25 969.09 225.23C967.22 227.22 965.45 229.34 963.84 231.55C962.23 233.75 960.74 236.08 959.42 238.46C958.1 240.85 956.92 243.34 955.9 245.87C954.89 248.4 954.03 251.01 953.34 253.64C952.65 256.28 952.12 258.97 951.77 261.67C951.41 264.37 951.23 267.11 951.21 269.83C951.2 272.54 951.35 275.28 951.68 277.98C952 280.67 952.5 283.37 953.16 286C953.81 288.63 954.64 291.24 955.62 293.76C956.6 296.29 957.75 298.77 959.04 301.15C960.32 303.54 961.77 305.85 963.34 308.05C964.91 310.25 966.64 312.37 968.47 314.35C970.3 316.34 972.27 318.22 974.34 319.96C976.4 321.7 978.59 323.32 980.85 324.79C983.12 326.25 985.49 327.58 987.91 328.75C990.34 329.92 992.86 330.95 995.41 331.81C997.96 332.66 1000.58 333.37 1003.22 333.9C1005.85 334.43 1008.54 334.8 1011.22 335C1013.89 335.2 1016.6 335.23 1019.28 335.09C1021.96 334.95 1024.65 334.64 1027.29 334.17C1029.93 333.7 1032.56 333.06 1035.11 332.27C1037.67 331.47 1040.19 330.51 1042.63 329.4C1045.06 328.3 1047.44 327.03 1049.72 325.63C1051.99 324.23 1054.2 322.67 1056.28 321C1058.36 319.33 1060.35 317.51 1062.2 315.59C1064.05 313.68 1065.8 311.63 1067.39 309.5C1068.99 307.36 1070.47 305.12 1071.78 302.81C1073.1 300.49 1074.28 298.08 1075.3 295.63C1076.32 293.17 1077.46 289.33 1077.89 288.07" stroke="#0a0ab4" stroke-width="2.1" fill="none" />
<path d="M1052.43 222.15C1051.37 221.49 1048.28 219.38 1046.11 218.2C1043.93 217.02 1041.66 215.97 1039.36 215.07C1037.06 214.17 1034.69 213.41 1032.3 212.8C1029.91 212.19 1027.46 211.73 1025.02 211.42C1022.58 211.11 1020.1 210.95 1017.65 210.95C1015.19 210.94 1012.72 211.09 1010.29 211.39C1007.85 211.69 1005.43 212.14 1003.05 212.73C1000.68 213.33 998.33 214.07 996.05 214.95C993.78 215.83 991.54 216.86 989.4 218.01C987.25 219.16 985.16 220.45 983.18 221.86C981.2 223.26 979.29 224.8 977.5 226.43C975.71 228.07 974.01 229.82 972.44 231.66C970.86 233.5 969.4 235.45 968.07 237.46C966.73 239.48 965.52 241.59 964.45 243.74C963.38 245.9 962.44 248.14 961.65 250.41C960.85 252.68 960.19 255.01 959.69 257.35C959.18 259.7 958.82 262.09 958.6 264.47C958.39 266.85 958.32 269.27 958.4 271.65C958.48 274.04 958.72 276.44 959.09 278.79C959.46 281.14 959.99 283.49 960.65 285.77C961.31 288.05 962.11 290.31 963.05 292.49C963.98 294.67 965.06 296.81 966.25 298.85C967.45 300.89 968.78 302.88 970.21 304.75C971.64 306.63 973.2 308.43 974.85 310.11C976.5 311.79 978.27 313.38 980.11 314.85C981.95 316.31 983.89 317.67 985.9 318.89C987.9 320.11 989.99 321.21 992.12 322.18C994.26 323.14 996.46 323.98 998.69 324.67C1000.92 325.36 1003.21 325.92 1005.51 326.33C1007.8 326.74 1010.13 327.01 1012.46 327.13C1014.78 327.25 1017.12 327.23 1019.43 327.07C1021.75 326.91 1024.07 326.6 1026.34 326.15C1028.61 325.71 1030.87 325.12 1033.06 324.4C1035.25 323.68 1037.42 322.81 1039.5 321.83C1041.58 320.85 1043.62 319.73 1045.56 318.5C1047.5 317.27 1049.38 315.91 1051.15 314.45C1052.92 312.99 1054.61 311.42 1056.19 309.76C1057.76 308.1 1059.24 306.33 1060.6 304.49C1061.95 302.65 1063.2 300.72 1064.32 298.73C1065.43 296.75 1066.79 293.6 1067.29 292.57" stroke="#0a0ab4" stroke-width="2.1" fill="none" />
<circle cx="1016.5" cy="270.7" r="36.7" stroke="#0a0ab4" stroke-width="1.9"/>
<circle cx="1016.5" cy="270.7" r="34.3" stroke="#0a0ab4" stroke-width="1.9"/>
<circle cx="1016.5" cy="270.7" r="30.2" stroke="#0a0ab4" stroke-width="1.9"/>
<circle cx="1016.5" cy="270.7" r="16.6" stroke="#0a0ab4" stroke-width="1.9"/>
<circle cx="1016.5" cy="270.7" r="14.2" stroke="#0a0ab4" stroke-width="1.9"/>
<path d="M1033.47 271.72L1046.45 272.5M1032.73 275.75L1045.15 279.61M1031.05 279.49L1042.18 286.21M1028.53 282.72L1037.72 291.9M1025.3 285.24L1032.03 296.37M1021.56 286.93L1025.44 299.34M1017.53 287.67L1018.32 300.64M1013.44 287.42L1011.1 300.21M1009.53 286.21L1004.2 298.06M1006.02 284.09L998.01 294.32M1003.12 281.19L992.89 289.21M1001 277.68L989.15 283.02M999.78 273.77L986.99 276.12M999.53 269.68L986.55 268.9M1000.27 265.65L987.85 261.79M1001.95 261.91L990.82 255.19M1004.47 258.68L995.28 249.5M1007.7 256.16L1000.97 245.03M1011.44 254.47L1007.56 242.06M1015.47 253.73L1014.68 240.76M1019.56 253.98L1021.9 241.19M1023.47 255.19L1028.8 243.34M1026.98 257.31L1034.99 247.08M1029.88 260.21L1040.11 252.19M1032 263.72L1043.85 258.38M1033.22 267.63L1046.01 265.28" stroke="#0a0ab4" stroke-width="1.7" fill="none" />
<path d="M1052.4 204.3V279Q1052.6 290.500 1061 292.4L1067.4 292.6L1078 288.1L1089 286.3" stroke="#0a0ab4" stroke-width="2" fill="none" />
<path d="M1016.5 177.4L1016.5 270.7" stroke="#111" stroke-width="1" />
<path d="M1052.4 177.4L1052.4 204" stroke="#111" stroke-width="1" />
<path d="M1016.5 270.5L1135.4 270.5" stroke="#111" stroke-width="1" />
<path d="M1056.7 285.2L1135.4 285.2" stroke="#111" stroke-width="1" />
<path d="M1016.5 181.9L1052.4 181.9" stroke="#111" stroke-width="1" />
<path d="M1016.5 181.9L1021.5 183.42L1029 183.8L1029 180L1021.5 180.38z" stroke="none" stroke-width="0" fill="#111" />
<path d="M1052.4 181.9L1047.4 180.38L1039.9 180L1039.9 183.8L1047.4 183.42z" stroke="none" stroke-width="0" fill="#111" />
<text x="1029" y="174" font-size="17.14" fill="#1c1c1c" font-style="italic" textLength="10" lengthAdjust="spacingAndGlyphs">14</text>
<text x="936.3" y="186.3" font-size="14.71" fill="#1c1c1c" font-style="italic" textLength="18.5" lengthAdjust="spacingAndGlyphs">к.р.</text>
<path d="M933 191H958.5L995.5 238" stroke="#111" stroke-width="1" fill="none" />
<path d="M1065.5 188.5L1052.4 196.3L1074.3 208.9V258.3" stroke="#111" stroke-width="1" fill="none" />
<text x="1069.6" y="251" font-size="17.57" fill="#1c1c1c" font-style="italic" textLength="37" lengthAdjust="spacingAndGlyphs" transform="rotate(-90 1069.6 251)">20 Rz</text>
<text x="1095.3" y="254.5" font-size="17.57" fill="#1c1c1c" font-style="italic" textLength="17.3" lengthAdjust="spacingAndGlyphs">R5</text>
<path d="M1118.9 262H1089.3L1054 288.1" stroke="#111" stroke-width="1" fill="none" />
<path d="M1054.2 287.9L1049.23 289.59L1042.96 293.73L1045.34 296.94L1051.13 292.16z" stroke="none" stroke-width="0" fill="#111" />
<path d="M1130.4 253.3L1130.4 334.8" stroke="#111" stroke-width="1" />
<path d="M1130.4 270.5L1131.92 265.5L1132.3 258L1128.5 258L1128.88 265.5z" stroke="none" stroke-width="0" fill="#111" />
<path d="M1130.4 285.2L1128.88 290.2L1128.5 297.7L1132.3 297.7L1131.92 290.2z" stroke="none" stroke-width="0" fill="#111" />
<text x="1124.3" y="327.8" font-size="17.57" fill="#1c1c1c" font-style="italic" textLength="26" lengthAdjust="spacingAndGlyphs" transform="rotate(-90 1124.3 327.8)">4,94</text>
<path d="M902 248L928.5 334.8" stroke="#111" stroke-width="1" />
<path d="M916 299L1016.5 270.7" stroke="#111" stroke-width="1" />
<path d="M927.8 333.4L1071 292" stroke="#111" stroke-width="1" />
<path d="M917.3 299.2L917.3 304.43L919.13 311.71L922.76 310.6L920.21 303.54z" stroke="none" stroke-width="0" fill="#111" />
<path d="M927.6 332.3L927.6 327.07L925.77 319.79L922.14 320.9L924.69 327.96z" stroke="none" stroke-width="0" fill="#111" />
<text x="908.9" y="249.4" font-size="17.57" fill="#1c1c1c" font-style="italic" textLength="30" lengthAdjust="spacingAndGlyphs" transform="rotate(73.05 908.9 249.4)">16,34</text>
<path d="M1118.2 149.7L1131.25 171.6L1151.6 135.8H1267.7" stroke="#14148c" stroke-width="2" fill="none" />
<text x="1152.6" y="163.75" font-size="26.43" fill="#000" font-style="italic" stroke="#fff" stroke-width="0.45" textLength="21.5" lengthAdjust="spacingAndGlyphs">Ra</text>
<text x="1182.3" y="163.75" font-size="26.43" fill="#000" font-style="italic" stroke="#fff" stroke-width="0.45" textLength="28" lengthAdjust="spacingAndGlyphs">0,8</text>
<path d="M1226.5 141Q1214.500 153 1218.300 165.500" stroke="#111" stroke-width="1.3" fill="none" />
<path d="M1257.700 141Q1261.500 153.500 1249.500 165.500" stroke="#111" stroke-width="1.3" fill="none" />
<path d="M1228 153.3L1236.5 168L1250 143.4" stroke="#111" stroke-width="1" fill="none" />
<clipPath id="hc3"><path d="M366.5 670L382.5 642.5L392.5 661.9L475 673.75L498.75 684.4A93.7 93.7 0 0 0 545.6 683.75L569.4 673.75L637.5 673.75L657.5 661.9L667.5 661.9L667.5 736.25C665.21 735 658.12 730.52 653.75 728.75C649.38 726.98 648.54 725.91 641.25 725.6C633.96 725.29 620.21 725.75 610 726.9C599.79 728.05 589.79 730.83 580 732.5C570.21 734.17 560.92 736.23 551.25 736.9C541.58 737.57 530.83 736.57 522 736.5C513.17 736.43 504.57 736.8 498.3 736.5C492.03 736.2 492.5 735.85 484.4 734.7C476.3 733.55 459.88 731.5 449.7 729.6C439.52 727.7 430.02 724.4 423.3 723.3C416.58 722.2 415.42 722.42 409.4 723C403.38 723.58 394.38 724.78 387.2 726.8C380.02 728.82 369.78 733.72 366.3 735.1z"/></clipPath>
<g clip-path="url(#hc3)" stroke="#000" stroke-width="1.05">
<path d="M364 631.2L670 325.2M364 642.12L670 336.12M364 653.05L670 347.05M364 663.97L670 357.97M364 674.9L670 368.9M364 685.82L670 379.82M364 696.75L670 390.75M364 707.67L670 401.67M364 718.6L670 412.6M364 729.52L670 423.52M364 740.45L670 434.45M364 751.37L670 445.37M364 762.3L670 456.3M364 773.22L670 467.22M364 784.15L670 478.15M364 795.07L670 489.07M364 806L670 500M364 816.92L670 510.92M364 827.85L670 521.85M364 838.77L670 532.77M364 849.7L670 543.7M364 860.62L670 554.62M364 871.55L670 565.55M364 882.47L670 576.47M364 893.4L670 587.4M364 904.32L670 598.32M364 915.25L670 609.25M364 926.17L670 620.17M364 937.1L670 631.1M364 948.02L670 642.02M364 958.95L670 652.95M364 969.87L670 663.87M364 980.8L670 674.8M364 991.72L670 685.72M364 1002.65L670 696.65M364 1013.57L670 707.57M364 1024.5L670 718.5M364 1035.42L670 729.42"/></g>
<path d="M366.3 735.1C369.78 733.72 380.02 728.82 387.2 726.8C394.38 724.78 403.38 723.58 409.4 723C415.42 722.42 416.58 722.2 423.3 723.3C430.02 724.4 439.52 727.7 449.7 729.6C459.88 731.5 476.3 733.55 484.4 734.7C492.5 735.85 492.03 736.2 498.3 736.5C504.57 736.8 513.17 736.43 522 736.5C530.83 736.57 541.58 737.57 551.25 736.9C560.92 736.23 570.21 734.17 580 732.5C589.79 730.83 599.79 728.05 610 726.9C620.21 725.75 633.96 725.29 641.25 725.6C648.54 725.91 649.38 726.98 653.75 728.75C658.12 730.52 665.21 735 667.5 736.25" stroke="#111" stroke-width="1" fill="none" />
<path d="M373 643.3L683 643.3" stroke="#e8a04a" stroke-width="1" stroke-dasharray="34.7 4 4 3.6"/>
<path d="M366.3 735.1L366.5 670L382.5 642.5L392.5 661.9L475 673.75L498.75 684.4A93.7 93.7 0 0 0 545.6 683.75L569.4 673.75L637.5 673.75L657.5 661.9L667.5 661.9L667.5 736.25" stroke="#14148c" stroke-width="1.8" fill="none" stroke-linejoin="round"/>
<rect x="390.5" y="659.9" width="4" height="4" fill="#e8909c" stroke="none" transform="rotate(45 392.5 661.9)"/>
<rect x="473" y="671.75" width="4" height="4" fill="#e8909c" stroke="none" transform="rotate(45 475 673.75)"/>
<rect x="496.75" y="682.4" width="4" height="4" fill="#e8909c" stroke="none" transform="rotate(45 498.75 684.4)"/>
<rect x="519.9" y="684.9" width="4" height="4" fill="#e8909c" stroke="none" transform="rotate(45 521.9 686.9)"/>
<rect x="543.6" y="681.75" width="4" height="4" fill="#e8909c" stroke="none" transform="rotate(45 545.6 683.75)"/>
<rect x="567.4" y="671.75" width="4" height="4" fill="#e8909c" stroke="none" transform="rotate(45 569.4 673.75)"/>
<rect x="635.5" y="671.75" width="4" height="4" fill="#e8909c" stroke="none" transform="rotate(45 637.5 673.75)"/>
<path d="M392.5 643.3L475.6 643.3" stroke="#111" stroke-width="1" />
<path d="M545 643.3L630.6 643.3" stroke="#111" stroke-width="1" />
<path d="M392.5 662L471.9 662" stroke="#111" stroke-width="1" />
<path d="M547.5 684L604.4 684" stroke="#111" stroke-width="1" />
<path d="M295 488.5L396.9 488.5" stroke="#111" stroke-width="1" />
<path d="M366.5 488.5L361.5 486.98L354 486.6L354 490.4L361.5 490.02z" stroke="none" stroke-width="0" fill="#111" />
<path d="M380.6 488.5L385.6 490.02L393.1 490.4L393.1 486.6L385.6 486.98z" stroke="none" stroke-width="0" fill="#111" />
<path d="M363 500.25L450 500.25" stroke="#111" stroke-width="1" />
<path d="M380.6 500.25L375.6 498.73L368.1 498.35L368.1 502.15L375.6 501.77z" stroke="none" stroke-width="0" fill="#111" />
<path d="M384.4 500.25L389.4 501.77L396.9 502.15L396.9 498.35L389.4 498.73z" stroke="none" stroke-width="0" fill="#111" />
<path d="M366.5 523.5L463.75 523.5" stroke="#111" stroke-width="1" />
<path d="M384.4 523.5L379.4 521.98L371.9 521.6L371.9 525.4L379.4 525.02z" stroke="none" stroke-width="0" fill="#111" />
<path d="M392.5 523.5L397.5 525.02L405 525.4L405 521.6L397.5 521.98z" stroke="none" stroke-width="0" fill="#111" />
<path d="M392.5 547.3L711.9 547.3" stroke="#111" stroke-width="1" />
<path d="M392.5 547.3L397.5 548.82L405 549.2L405 545.4L397.5 545.78z" stroke="none" stroke-width="0" fill="#111" />
<path d="M475.6 547.3L470.6 545.78L463.1 545.4L463.1 549.2L470.6 548.82z" stroke="none" stroke-width="0" fill="#111" />
<path d="M475.6 547.3L480.6 548.82L488.1 549.2L488.1 545.4L480.6 545.78z" stroke="none" stroke-width="0" fill="#111" />
<path d="M569.4 547.3L564.4 545.78L556.9 545.4L556.9 549.2L564.4 548.82z" stroke="none" stroke-width="0" fill="#111" />
<path d="M569.4 547.3L574.4 548.82L581.9 549.2L581.9 545.4L574.4 545.78z" stroke="none" stroke-width="0" fill="#111" />
<path d="M637.5 547.3L632.5 545.78L625 545.4L625 549.2L632.5 548.82z" stroke="none" stroke-width="0" fill="#111" />
<path d="M657.5 547.3L662.5 548.82L670 549.2L670 545.4L662.5 545.78z" stroke="none" stroke-width="0" fill="#111" />
<path d="M640 575.25L698 575.25" stroke="#111" stroke-width="1" />
<path d="M657.5 575.25L652.5 573.73L645 573.35L645 577.15L652.5 576.77z" stroke="none" stroke-width="0" fill="#111" />
<path d="M667.5 575.25L672.5 576.77L680 577.15L680 573.35L672.5 573.73z" stroke="none" stroke-width="0" fill="#111" />
<path d="M366.5 484.4L366.5 670" stroke="#111" stroke-width="1" />
<path d="M380.6 484.4L380.6 642" stroke="#111" stroke-width="1" />
<path d="M384.4 495L384.4 642" stroke="#111" stroke-width="1" />
<path d="M392.5 519L392.5 662" stroke="#111" stroke-width="1" />
<path d="M475.6 543L475.6 674" stroke="#111" stroke-width="1" />
<path d="M569.4 544L569.4 674" stroke="#111" stroke-width="1" />
<path d="M637.5 543L637.5 674" stroke="#111" stroke-width="1" />
<path d="M657.5 543L657.5 662" stroke="#111" stroke-width="1" />
<text x="300.6" y="481.5" font-size="17.43" fill="#1c1c1c" font-style="italic" textLength="51.3" lengthAdjust="spacingAndGlyphs">2,58±0,1</text>
<text x="398.75" y="492.5" font-size="17.43" fill="#1c1c1c" font-style="italic" textLength="44.3" lengthAdjust="spacingAndGlyphs">0,9±0,1</text>
<text x="408" y="516.9" font-size="17.43" fill="#1c1c1c" font-style="italic" textLength="49" lengthAdjust="spacingAndGlyphs">1,5±0,05</text>
<text x="403.75" y="540" font-size="17.43" fill="#1c1c1c" font-style="italic" textLength="62.5" lengthAdjust="spacingAndGlyphs">16,17±0,05</text>
<text x="491.9" y="539.4" font-size="17.43" fill="#1c1c1c" font-style="italic" textLength="62.5" lengthAdjust="spacingAndGlyphs">18,19±0,05</text>
<text x="572.5" y="539.4" font-size="17.43" fill="#1c1c1c" font-style="italic" textLength="62.5" lengthAdjust="spacingAndGlyphs">13,14±0,05</text>
<text x="672.5" y="539.4" font-size="17.43" fill="#1c1c1c" font-style="italic" textLength="32.5" lengthAdjust="spacingAndGlyphs">4±0,1</text>
<text x="681.9" y="567.5" font-size="17.43" fill="#1c1c1c" font-style="italic" textLength="10" lengthAdjust="spacingAndGlyphs">2</text>
<text x="416.25" y="628.75" font-size="17.43" fill="#1c1c1c" font-style="italic" textLength="62.75" lengthAdjust="spacingAndGlyphs" transform="rotate(-90 416.25 628.75)">3,5±0,009</text>
<text x="463.75" y="628" font-size="17.43" fill="#1c1c1c" font-style="italic" textLength="49" lengthAdjust="spacingAndGlyphs" transform="rotate(-90 463.75 628)">6±0,012</text>
<text x="553.75" y="617.5" font-size="17.43" fill="#1c1c1c" font-style="italic" textLength="28" lengthAdjust="spacingAndGlyphs" transform="rotate(-90 553.75 617.5)">4,02</text>
<text x="593" y="627.5" font-size="17.43" fill="#1c1c1c" font-style="italic" textLength="47.5" lengthAdjust="spacingAndGlyphs" transform="rotate(-90 593 627.5)">8±0,015</text>
<text x="620.6" y="627.5" font-size="17.43" fill="#1c1c1c" font-style="italic" textLength="48" lengthAdjust="spacingAndGlyphs" transform="rotate(-90 620.6 627.5)">6±0,012</text>
<text x="498.8" y="660.7" font-size="17.43" fill="#1c1c1c" font-style="italic" textLength="78" lengthAdjust="spacingAndGlyphs" transform="rotate(-59.8 498.8 660.7)">R 18,19±0,05</text>
<text x="324.5" y="622.5" font-size="17.43" fill="#1c1c1c" font-style="italic" textLength="36" lengthAdjust="spacingAndGlyphs" transform="rotate(-54 324.5 622.5)">23°9'</text>
<rect x="445" y="680" width="19" height="17" fill="#fff" transform="rotate(-62 446.5 694.5)"/>
<text x="446.5" y="694.5" font-size="17.43" fill="#1c1c1c" font-style="italic" textLength="15" lengthAdjust="spacingAndGlyphs" transform="rotate(-62 446.5 694.5)">8°</text>
<text x="339" y="747.5" font-size="17.43" fill="#1c1c1c" font-style="italic" textLength="25" lengthAdjust="spacingAndGlyphs" transform="rotate(8 339 747.5)">24°</text>
<path d="M422.5 562L422.5 678" stroke="#111" stroke-width="1" />
<path d="M422.5 643.3L424.02 638.3L424.4 630.8L420.6 630.8L420.98 638.3z" stroke="none" stroke-width="0" fill="#111" />
<path d="M422.5 662L420.98 667L420.6 674.5L424.4 674.5L424.02 667z" stroke="none" stroke-width="0" fill="#111" />
<path d="M470.4 574L470.4 673.5" stroke="#111" stroke-width="1" />
<path d="M470.4 643.3L468.88 648.3L468.5 655.8L472.3 655.8L471.92 648.3z" stroke="none" stroke-width="0" fill="#111" />
<path d="M470.4 673.5L471.92 668.5L472.3 661L468.5 661L468.88 668.5z" stroke="none" stroke-width="0" fill="#111" />
<path d="M559.6 584L559.6 660.6" stroke="#111" stroke-width="1" />
<path d="M559.6 631.5L561.12 626.5L561.5 619L557.7 619L558.08 626.5z" stroke="none" stroke-width="0" fill="#111" />
<path d="M559.6 643.3L558.08 648.3L557.7 655.8L561.5 655.8L561.12 648.3z" stroke="none" stroke-width="0" fill="#111" />
<path d="M599.5 574L599.5 684" stroke="#111" stroke-width="1" />
<path d="M599.5 643.3L597.98 648.3L597.6 655.8L601.4 655.8L601.02 648.3z" stroke="none" stroke-width="0" fill="#111" />
<path d="M599.5 684L601.02 679L601.4 671.5L597.6 671.5L597.98 679z" stroke="none" stroke-width="0" fill="#111" />
<path d="M626.5 574L626.5 673.75" stroke="#111" stroke-width="1" />
<path d="M626.5 643.3L624.98 648.3L624.6 655.8L628.4 655.8L628.02 648.3z" stroke="none" stroke-width="0" fill="#111" />
<path d="M626.5 673.75L628.02 668.75L628.4 661.25L624.6 661.25L624.98 668.75z" stroke="none" stroke-width="0" fill="#111" />
<path d="M521.9 634.4L495 680" stroke="#111" stroke-width="1" />
<path d="M495.3 679.5L499.15 675.96L503.28 669.69L500.01 667.77L496.53 674.42z" stroke="none" stroke-width="0" fill="#111" />
<path d="M522.25 634.4L522.25 793.5" stroke="#111" stroke-width="1" />
<path d="M462.02 645.21L462.82 648.99L463.42 652.8L463.81 656.64L463.99 660.5L463.96 664.36L463.72 668.21L463.28 672.04L462.63 675.85L461.77 679.61L460.71 683.33L459.46 686.98L458.01 690.55L456.37 694.05L454.54 697.45L452.53 700.74L450.34 703.93" stroke="#111" stroke-width="1" fill="none" />
<path d="M464 661.9L465.1 656.86L465.16 649.35L461.96 649.46L462.55 656.95z" stroke="none" stroke-width="0" fill="#111" />
<path d="M463.3 672L461.5 676.84L460.4 684.26L463.58 684.6L464.05 677.11z" stroke="none" stroke-width="0" fill="#111" />
<path d="M360.6 588.5L382.5 641.9" stroke="#111" stroke-width="1" />
<path d="M327.19 628.71L328.52 624.18L330.23 619.77L332.29 615.52L334.7 611.46L337.43 607.6L340.48 603.99L343.81 600.64L347.41 597.58L351.25 594.83L355.3 592.41L359.54 590.33L363.94 588.61L368.47 587.25L373.09 586.28L377.78 585.7L382.5 585.5L392 586" stroke="#111" stroke-width="1" fill="none" />
<path d="M363 589.7L368.16 589.73L375.52 588.23L374.74 585.12L367.54 587.25z" stroke="none" stroke-width="0" fill="#111" />
<path d="M380.6 586L385.33 587.53L392.5 588.23L392.67 585.03L385.46 584.97z" stroke="none" stroke-width="0" fill="#111" />
<path d="M384 639L327.5 756.7" stroke="#111" stroke-width="1" />
<path d="M366.3 760.4L363.91 760.37L361.52 760.26L359.14 760.1L356.76 759.86L354.39 759.55L352.02 759.18L349.67 758.74L347.34 758.24L345.01 757.67L342.71 757.03L340.42 756.33L338.16 755.56L335.92 754.73L333.7 753.84L331.51 752.89L329.35 751.87" stroke="#111" stroke-width="1" fill="none" />
<path d="M329.7 752L333.4 755.32L339.67 758.87L341.12 756.02L334.56 753.04z" stroke="none" stroke-width="0" fill="#111" />
<path d="M366.3 760.4L361.44 759.37L354.23 759.43L354.4 762.63L361.57 761.93z" stroke="none" stroke-width="0" fill="#111" />
<path d="M366.3 735L366.3 828.6" stroke="#111" stroke-width="1" />
<path d="M667.5 736.5L667.5 827" stroke="#111" stroke-width="1" />
<path d="M366.3 789.4L522.2 789.4" stroke="#111" stroke-width="1" />
<path d="M366.3 789.4L371.3 790.92L378.8 791.3L378.8 787.5L371.3 787.88z" stroke="none" stroke-width="0" fill="#111" />
<path d="M522.2 789.4L517.2 787.88L509.7 787.5L509.7 791.3L517.2 790.92z" stroke="none" stroke-width="0" fill="#111" />
<path d="M366.3 824.4L667.6 824.4" stroke="#111" stroke-width="1" />
<path d="M366.3 824.4L371.3 825.92L378.8 826.3L378.8 822.5L371.3 822.88z" stroke="none" stroke-width="0" fill="#111" />
<path d="M667.6 824.4L662.6 822.88L655.1 822.5L655.1 826.3L662.6 825.92z" stroke="none" stroke-width="0" fill="#111" />
<text x="427.5" y="782.8" font-size="17.86" fill="#1c1c1c" font-style="italic" textLength="32.5" lengthAdjust="spacingAndGlyphs">30,17</text>
<text x="503.2" y="817.8" font-size="17.86" fill="#1c1c1c" font-style="italic" textLength="27.5" lengthAdjust="spacingAndGlyphs">58,5</text>
<path d="M219.5 837V873.4M219.5 872.5H253M217.300 840.500h4.400v-4.400h-4.400zM246 869.800l6 2.700-6 2.700z" stroke="#9a9a9a" stroke-width="1" fill="none" />
<text x="220.5" y="835" font-size="9" fill="#9a9a9a" font-style="normal" stroke="#1c1c1c" stroke-width="0.3">Y</text>
<text x="256" y="870.5" font-size="9" fill="#9a9a9a" font-style="normal" stroke="#1c1c1c" stroke-width="0.3">X</text>
<path d="M219 633.3L1302 633.3" stroke="#fff" stroke-width="1" />
<path d="M668.6 108L668.6 873" stroke="#fff" stroke-width="1" />
</g>
</svg>
<svg width="1920" height="1080" viewBox="0 0 1920 1080" shape-rendering="auto" id="icons">
<defs>
<linearGradient id="gClose" x1="0" y1="0" x2="0" y2="1"><stop offset="0" stop-color="#f3b3a6"/><stop offset=".45" stop-color="#e8887a"/><stop offset=".5" stop-color="#cf3a1c"/><stop offset="1" stop-color="#e0662a"/></linearGradient>
<linearGradient id="gBtn" x1="0" y1="0" x2="0" y2="1"><stop offset="0" stop-color="#c9d3e6"/><stop offset=".45" stop-color="#9fb0cf"/><stop offset=".5" stop-color="#6079a8"/><stop offset="1" stop-color="#7a93c0"/></linearGradient>
<radialGradient id="gOrb" cx=".5" cy=".35" r=".7"><stop offset="0" stop-color="#9fd0f5"/><stop offset=".5" stop-color="#3a86d0"/><stop offset="1" stop-color="#123a7c"/></radialGradient>
<radialGradient id="gHelp" cx=".4" cy=".3" r=".8"><stop offset="0" stop-color="#7a8cf0"/><stop offset="1" stop-color="#1a23a8"/></radialGradient>
<g id="mag"><circle cx="0" cy="0" r="5.500" fill="#eaf2ff" stroke="#1b2a8c" stroke-width="1.600"/><path d="M4 4l5 5.500" stroke="#1b2a8c" stroke-width="2.600" stroke-linecap="round"/><path d="M4.500 4.500l4 4.500" stroke="#8fa4e8" stroke-width="1"/></g>
</defs>
<!-- title icon -->
<circle cx="10" cy="11" r="8" fill="#2f8fd8" stroke="#d8ecfb" stroke-width="1.2"/>
<path d="M6.5 6.5v9M7 11l5-4.5M7 11l6 5" stroke="#fff" stroke-width="1.8" fill="none"/>
<!-- window buttons -->
<path d="M1813.5 0v14q0 4 4 4h95.5q4 0 4-4V0z" fill="url(#gBtn)" stroke="#d9e2f2" stroke-width="1"/>
<path d="M1870 0h47v14q0 3.500 -3.500 3.500H1870z" fill="url(#gClose)"/>
<path d="M1842.500 0v17.500M1869.500 0v17.500" stroke="#2b3c5e" stroke-width="1"/>
<path d="M1843.500 0v17.500M1870.500 0v17.500" stroke="#d9e2f2" stroke-width=".8" opacity=".7"/>
<rect x="1823.500" y="8.500" width="10" height="3" fill="#fff" stroke="#46526e" stroke-width=".8"/>
<rect x="1852.500" y="3.500" width="8" height="7" fill="none" stroke="#fff" stroke-width="1.6"/>
<rect x="1850" y="6" width="8" height="7" fill="#59688a" stroke="#fff" stroke-width="1.800"/>
<path d="M1888.500 4.500l9.500 8.500M1898 4.500l-9.500 8.500" stroke="#8a2a18" stroke-width="3.600" opacity=".5"/><path d="M1888.500 4.500l9.500 8.500M1898 4.500l-9.500 8.500" stroke="#fff" stroke-width="2.600"/>
<!-- MDI buttons -->
<rect x="1873.500" y="35.500" width="10" height="3.500" rx="1" fill="#fff" stroke="#4a4f5c"/>
<rect x="1892.500" y="31.500" width="7" height="6" fill="#fff" stroke="#4a4f5c" stroke-width="1.200"/>
<rect x="1888.500" y="35.500" width="7" height="6" fill="#fff" stroke="#4a4f5c" stroke-width="1.200"/>
<rect x="1890.500" y="37.500" width="3" height="2" fill="#fff" stroke="#4a4f5c" stroke-width=".8"/>
<path d="M1906 32l9.500 8M1915.500 32l-9.500 8" stroke="#4a4f5c" stroke-width="3.800"/>
<path d="M1906 32l9.500 8M1915.500 32l-9.500 8" stroke="#fff" stroke-width="1.800"/>
<!-- menu doc icon -->
<path d="M11.500 26.500h8l4 4v11h-12z" fill="#fff" stroke="#000" stroke-width="1.300"/>
<rect x="14.500" y="32" width="5" height="3" fill="#fff" stroke="#1616a8" stroke-width="1.200"/>
<path d="M19 30.500v6M20 33.500h2" stroke="#1616a8" stroke-width="1.200"/>
<path d="M15.500 38h7v3h-7zM18 38v3M20.500 38v3M15.500 39.500h7" stroke="#000" stroke-width=".8" fill="none"/>
<!-- row1 icons -->
<g stroke="#000" stroke-width="1.200" fill="none">
<path d="M13.500 54.500h6M16.500 51.500v6M22.500 54.500h6M25.500 51.500v6"/><circle cx="16.500" cy="54.500" r="1.500" fill="#fff"/><circle cx="25.500" cy="54.500" r="1.500" fill="#fff"/>
</g>
<path d="M16.500 59v8M16.500 64.500h8M25.500 61.500v6M21.500 62.500l3 2-3 2" stroke="#1b1bc0" stroke-width="1.300" fill="none"/>
<g stroke="#b8bbc0" fill="#f2f3f5" stroke-width="1"><rect x="109.500" y="50.500" width="10" height="10"/><rect x="107.500" y="52.500" width="10" height="10"/><rect x="105.500" y="54.500" width="10" height="10"/></g>
<path d="M108.500 65v-7M106 60l2.500-3 2.500 3M108.500 62.500h5M111.500 60l3 2.500-3 2.500" stroke="#8e9298" stroke-width="1.200" fill="none"/>
<g stroke="#1414a0" stroke-width="1.200" fill="#fff"><path d="M221 63.500l5-4h12l-5 4z"/><path d="M221 59.500l5-4h12l-5 4z"/><path d="M221 55.500l5-4h12l-5 4z"/></g>
<!-- magnet -->
<path d="M383 60.500l6-7.500q4-3.500 7.500 0 3 3.500 0 7l-5 5.500-3.200-2.500 5-5.500q1-1.800-.3-2.800-1.400-.9-2.700.4l-5 7z" fill="#d6241c"/>
<path d="M391.300 65.500l5.200-5.500q3-3.500 0-7l-2.200 1.500q1.500 2 .2 3.600l-6.200 5z" fill="#2d56d8"/>
<path d="M383 60.500l3 2.300-1.500 1.800-3-2.200z" fill="#b5b5b5"/>
<!-- parallel/perp -->
<path d="M424 58l7-6M426 62l7-6M433 59v7M429.500 66h7" stroke="#000" stroke-width="1.200" fill="none"/>
<!-- grid -->
<path d="M454 55.500h15M454 60.500h15M454 65.500h15M457.500 52v16M462.500 52v16M467.500 52v16" stroke="#000" stroke-width="1.100"/>
<!-- axes -->
<path d="M498.500 53v11.500M498.500 64.500h10" stroke="#000" stroke-width="1.300"/><path d="M498.500 52l-2.200 4h4.400zM510 64.500l-4-2.200v4.400z" fill="#000"/><rect x="496.500" y="62.500" width="3.500" height="3.500" fill="#fff" stroke="#1414a0"/>
<!-- step -->
<path d="M526.500 64.500h6v-11h6" stroke="#000" stroke-width="1.300" fill="none"/>
<!-- ortho highlighted -->
<path d="M549 64l13-9" stroke="#333" stroke-width="1"/><path d="M550.500 51v7M547 54.500h7M560.500 59v7M557 62.500h7" stroke="#000" stroke-width="1.100"/><circle cx="549.500" cy="63.500" r="1.200" fill="#fff" stroke="#000" stroke-width=".8"/><circle cx="561.500" cy="55" r="1.200" fill="#fff" stroke="#000" stroke-width=".8"/>
<!-- YX -->
<text x="577" y="58" font-size="8" font-family="Liberation Sans" fill="#000">Y</text><text x="585" y="68" font-size="8" font-family="Liberation Sans" fill="#000">X</text>
<path d="M588.500 52v8M584.500 56h8" stroke="#000" stroke-width="1.100"/><circle cx="588.500" cy="56" r="1.500" fill="#fff" stroke="#000" stroke-width=".9"/>
<!-- zoom icons -->

<use href="#mag" x="729" y="57"/><path d="M726.500 54h3.500l1.500 1.500v4h-5z" fill="#fff" stroke="#000" stroke-width=".9"/>
<use href="#mag" x="759" y="57"/><rect x="754.500" y="51.500" width="12" height="10" fill="none" stroke="#000" stroke-width=".9" stroke-dasharray="1 1"/>
<use href="#mag" x="789" y="57"/><path d="M786.500 55.500h5M789 53v5M786.500 59.500h5" stroke="#000" stroke-width=".9"/>
<!-- move -->
<path d="M879.500 52v14M872.500 59h14" stroke="#000" stroke-width="1.300"/><path d="M879.500 50.500l-2.500 3h5zM879.500 67.500l-2.500-3h5zM871 59l3-2.500v5zM888 59l-3-2.500v5z" fill="#000"/>
<!-- crane -->
<path d="M901.500 52.500h16M904.500 52.500v6" stroke="#000" stroke-width="1.600" fill="none"/><path d="M910 53v14h5v-14" fill="#fff" stroke="#000" stroke-width="1.300"/><path d="M910 56l5 3-5 3 5 3" stroke="#000" stroke-width=".8" fill="none"/><circle cx="904.500" cy="59.500" r="1.200" fill="none" stroke="#000"/><rect x="902" y="63" width="6" height="4" fill="#fff" stroke="#000" stroke-width="1"/><path d="M905 63v4M902 65h6" stroke="#000" stroke-width=".7"/>
<!-- refresh window -->
<path d="M924.500 52.500h13v9h-13z" fill="#fff" stroke="#16166a" stroke-width="1.200"/><rect x="924" y="52" width="14" height="2.500" fill="#16166a"/>
<path d="M931.500 63a4 4 0 0 1 7-2.500M939.500 64.500a4 4 0 0 1-7 2" stroke="#1f5ad0" stroke-width="2" fill="none"/><path d="M939.500 57.500v4h-4zM930.500 69v-4h4z" fill="#1f5ad0"/>
<!-- tb3 disabled icon -->
<g opacity=".55"><rect x="970.500" y="56.500" width="9" height="8" rx="1.500" fill="#eef0f3" stroke="#a9adb3"/><path d="M975 63l9-11 1 9-7 6z" fill="#c9ccd1" stroke="#a9adb3" stroke-width=".8"/><circle cx="974" cy="60.500" r="2" fill="none" stroke="#a9adb3"/></g>
<!-- small expand marks on tbends -->
<g stroke="#fff" stroke-width="1" fill="none"><path d="M701.500 61.500h5M702.500 63.500l1.500 2 1.500-2z" fill="#fff"/><path d="M947.500 61.500h5M948.500 63.500l1.500 2 1.500-2z" fill="#fff"/><path d="M992.500 61.500h5M993.500 63.500l1.500 2 1.500-2z" fill="#fff"/><path d="M461.500 87.500h5M462.500 89.500l1.500 2 1.500-2z" fill="#fff"/></g>
<!-- row2 icons -->
<path d="M17.500 78.500h8l3 3v10.500h-11z" fill="#fff" stroke="#000" stroke-width="1.200"/><path d="M25.500 78.500v3h3" fill="none" stroke="#000" stroke-width=".9"/>
<path d="M48 91.500v-9h4l1.500 1.500h6v7.500z" fill="#e8dc78" stroke="#000" stroke-width="1.100"/><path d="M48 91.500l3.500-6h12l-4 6z" fill="#cfc24e" stroke="#000" stroke-width="1.100"/><path d="M56 79.500q4-3 7 .5" stroke="#1d3fc4" stroke-width="1.600" fill="none"/><path d="M64.500 77.500v4.500h-4.500z" fill="#1d3fc4"/>
<rect x="71.500" y="78.500" width="13" height="13" fill="#8a8230" stroke="#000" stroke-width="1.200"/><rect x="74.500" y="79" width="7.500" height="6" fill="#f2f2ea" stroke="#000" stroke-width=".6"/><rect x="75" y="87" width="6.500" height="4.500" fill="#5a5420"/><rect x="76" y="88" width="1.800" height="2.500" fill="#fff"/>
<path d="M106 78.500h8.500l1.500 5h-11.500z" fill="#fff" stroke="#000" stroke-width="1"/><path d="M102.500 84h15.500l1 2v5h-17.500v-5z" fill="#d4d0a0" stroke="#000" stroke-width="1.100"/><path d="M103 88h16.500" stroke="#000" stroke-width="1.600"/><rect x="105" y="90" width="11.500" height="2.500" fill="#fff" stroke="#000" stroke-width=".8"/>
<path d="M145.500 78.500h7l3 3v10h-10z" fill="#fff" stroke="#000" stroke-width="1.200"/><circle cx="153" cy="86.500" r="3.500" fill="#dce8ff" stroke="#1b2a8c" stroke-width="1.300"/><path d="M155.500 89l4.500 4.500" stroke="#1b2a8c" stroke-width="2.200" stroke-linecap="round"/>
<g stroke="#b9bcc1" fill="none" stroke-width="1.100"><path d="M190 78l5 10M196 78l-5 10"/><circle cx="190.500" cy="90.500" r="2"/><circle cx="195.500" cy="90.500" r="2"/></g>
<g stroke="#b9bcc1" fill="#f1f2f4" stroke-width="1"><path d="M209.500 78.500h6l2 2v7h-8z"/><path d="M215.500 82.500h6l2 2v7h-8z"/><path d="M217 86h4M217 88.500h4" /></g>
<g stroke="#b9bcc1" fill="#e9eaed" stroke-width="1"><rect x="231.500" y="79.500" width="11" height="12" rx="1"/><rect x="234.500" y="78" width="5" height="3" fill="#d4d6da"/><path d="M238.500 84.500h6l2 2v6h-8z" fill="#f6f6f8"/></g>
<path d="M262 90l7-7 3 3-7 7z" fill="#f0e6a0" stroke="#444" stroke-width=".9"/><path d="M269.500 82.500l5-5 2.500 2.500-5 5z" fill="#2a3fb8" stroke="#14206a" stroke-width=".8"/><path d="M263 91l-1 2.500M265 92.500l-.5 2M267 93l.5 1.500" stroke="#444" stroke-width=".8"/>
<rect x="283.500" y="78.500" width="13" height="14" fill="#fff" stroke="#10105c" stroke-width="1.200"/><rect x="283" y="78" width="14" height="3" fill="#10105c"/><path d="M285.500 84h2M289 84h6M285.500 87h2M289 87h6M285.500 90h2M289 90h6" stroke="#10105c" stroke-width="1.400"/>
<path d="M314 83.500l5.500-5v3q8 0 7 10.500q-1.500-5.500-7-5v3z" fill="#1f4fd0" stroke="#0f2a86" stroke-width=".7"/>
<path d="M347.500 83.500l-5.500-5v3q-8 0-7 10.500q1.500-5.500 7-5v3z" fill="#d2d4d8" stroke="#b7b9be" stroke-width=".7"/>
<rect x="364.500" y="78.500" width="14" height="14" fill="#5ea0ea" stroke="#0e1c78" stroke-width="1.300"/><rect x="366.500" y="80.500" width="10" height="4" fill="#9cd0ff" stroke="#0e1c78" stroke-width=".9"/><rect x="366.500" y="86.500" width="10" height="4" fill="#9cd0ff" stroke="#0e1c78" stroke-width=".9"/><path d="M370 82.500h3M370 88.500h3" stroke="#0e1c78"/><path d="M378.500 78.500l1.500 1.500v13.500l-1.500-1" fill="#0e1c78"/>
<rect x="392.500" y="78.500" width="9" height="10" fill="#8fd0c8" stroke="#1a5a58" stroke-width="1"/><rect x="390.500" y="80.500" width="9" height="10" fill="#6fc0b8" stroke="#1a5a58" stroke-width="1"/><rect x="388.500" y="82.500" width="8" height="10" fill="#fff" stroke="#000" stroke-width="1"/><path d="M388.500 89.500h8M391 89.500v3M393.500 89.500v3" stroke="#000" stroke-width=".8"/><circle cx="389.500" cy="80.500" r="3" fill="#f4dc3c" stroke="#000" stroke-width=".8"/><text x="387.800" y="83" font-size="6" font-weight="bold" font-family="Liberation Sans" fill="#000">?</text>
<text x="408" y="90.500" font-size="13.500" font-weight="bold" font-family="Liberation Sans" fill="#0c0c6a" textLength="17" lengthAdjust="spacingAndGlyphs">f(x)</text>
<path d="M438.500 78v12l3-2.500 2.500 5 2-1-2.500-5h4z" fill="#000"/><text x="446" y="90" font-size="15" font-weight="bold" font-family="Liberation Sans" fill="#0c0c5a">?</text>
<!-- left bar icons -->
<g stroke="#000" stroke-width="1.100" fill="none">
<path d="M10 145l9-9M10 141v5h0M9 142l4 4M16 135l4 4"/>
<circle cx="12.500" cy="153.500" r="2.500"/><path d="M14 162h6l-3-6z"/>
<path d="M10.500 170.500h4v4h-4zM12.500 174.500v5M9 180.500h12M16 176l2 3.500 3-7" />
<path d="M9 187.500h12M9 192.500h12M12.500 185v12M17.500 185v12"/><rect x="9.500" y="185.500" width="3" height="3" fill="#fff"/><circle cx="12.500" cy="196" r="1.300" fill="#fff"/><circle cx="17.500" cy="196" r="1.300" fill="#fff"/>
<path d="M10 230l7-6M12 234l7-6M19 231v6M16 237h6" transform="translate(-1,-8)"/>
<path d="M9 248l5.500-11 5.500 11M12 243l5.500-3.500M17 243l-5.500-3.500"/>
<path d="M11 264l7-10" />
<rect x="9.500" y="270.500" width="11" height="10" /><rect x="11.500" y="272.500" width="5" height="2.500" stroke="#1414a0"/><path d="M15.500 277.500h5v3h-5zM18 277.500v3" stroke-width=".8"/>
<path d="M10.500 287.500h7l3 3v8h-10z"/>
<path d="M9 372.500h11v9h-11zM9 375.500h11M9 378.500h11M12.500 372.500v9M16.500 372.500v9" stroke-width=".9"/><rect x="9" y="371" width="11" height="2" fill="#000"/>
<path d="M9 399l2 .5 2-4M13 399.500l7-10M9 401.500h11" />
<rect x="9.500" y="412.500" width="8" height="7"/><path d="M13.500 419.500v4M8 427.500h12" stroke="#1414a0"/><path d="M13.500 423l-2.500 4h5z" fill="#000"/>
<path d="M5 448l5-11 6 9M9.500 437h6" stroke-width="1.200"/><path d="M4 449.500l.5-4 2.800 2zM17.500 449l-3.500-2 2.800-2z" fill="#000"/>
<path d="M5 470l6-12M11 459h6M11 464h5M11 469h6M11 459v10" stroke-width="1.100"/><path d="M4 471.500l.8-4.200 2.700 2z" fill="#000"/>
<path d="M8 493v-13h12v6h-12M12 480v6M16 480v6"/><path d="M5 494.500h15" stroke="#1414a0"/><path d="M8 489l-2.500 5h5z" fill="#000"/>
<path d="M5 514.500h15" stroke-width="1.800"/><path d="M6 511l3-8 3 8M7 508.500h4M16.500 502v10" /><path d="M16.500 513.500l-2.500-4h5z" fill="#000"/>
<path d="M6 531l2.500-7 2.500 7M7 529h3M5 535.500h13"/><path d="M20 535.500l-4-2.200v4.400z" fill="#000"/>
<circle cx="11.500" cy="554" r="5" stroke="#1414a0"/><path d="M6.500 554h10M11.500 554v5M9 554v4.500" stroke="#1414a0"/><path d="M14 549.500l4-4h3"/>
<path d="M5 574.500h5M12 574.500h2M16 574.500h5"/>
<path d="M5 603.500h5M12 603.500h2M16 603.500h5"/>
<circle cx="12.500" cy="618.500" r="4.500"/><path d="M12.500 611.500v14M5.500 618.500h14"/>
<path d="M11 633q-3 4 0 7t0 7" />
<path d="M6 657.500h13v12M14 657.500l5 5"/>
</g>
<path d="M10 212l6-6 2 2-6 6z" fill="#c89838" stroke="#6a4a10" stroke-width=".8"/><path d="M14 204l3-2 5 4-2 3z" fill="#cfd2d8" stroke="#333" stroke-width=".8"/>
<path d="M9.500 254h5M12 251.500v5" stroke="#1a9a3a" stroke-width="1.800"/><path d="M15.500 262h5" stroke="#d02020" stroke-width="1.800"/>
<g stroke="#000" stroke-width=".8"><rect x="10.500" y="287.500" width="10" height="11" fill="none" stroke="none"/><path d="M11.500 291h8M11.500 293h8M11.500 295h8M11.500 297h8M13 289v9.500M15 289v9.500M17 290v8.500M19 291v7.500" stroke-width=".6"/></g>
<rect x="10.500" y="304.500" width="10" height="12" fill="#5a8af0" stroke="#10105c" stroke-width="1.100"/><rect x="12" y="310" width="7.500" height="5.500" fill="#b9d4ff"/><path d="M9.500 306h1.500M9.500 308.500h1.500M9.500 311h1.500M9.500 313.500h1.500" stroke="#10105c" stroke-width=".9"/>
<path d="M9.500 331.500l2.500-7h9l-2.500 7zM12 324.500l1.500-2.500h8.500l-1 2.500" fill="none" stroke="#14148c" stroke-width="1.100"/><circle cx="15" cy="328" r="1.600" fill="none" stroke="#14148c" stroke-width="1"/>
<path d="M8 348.500h12v3.500h-1.500v-2h-3v11h2v1.500h-7v-1.500h2v-11h-3v2h-1.500z" fill="#fff" stroke="#000" stroke-width="1.100"/>
<path d="M16 590l-5 8h3l-3 7 8-9h-3.500l3.500-6z" fill="#f4e81c" stroke="#8a8410" stroke-width=".7"/>
<path d="M20 450l0-3-3 3zM20 471l0-3-3 3zM20 649l0-3-3 3z" fill="#8a8d92"/>
<path d="M17.500 678v6l3-3z" fill="none" stroke="#fff" stroke-width=".9"/><path d="M15.500 678v6" stroke="#fff" stroke-width=".9"/>
<!-- start orb -->
<circle cx="27" cy="1060" r="18.500" fill="#0d2a5a" opacity=".6"/>
<circle cx="27" cy="1060" r="17.500" fill="url(#gOrb)" stroke="#a9c9ee" stroke-width="1.200"/>
<path d="M9.500 1056a17.500 17.500 0 0 1 35 0q-17 6-35 0z" fill="#fff" opacity=".28"/>
<path d="M18.500 1052.500q4-2.500 7.500-.5l-1.200 7q-3.500-1.800-7.300.3z" fill="#ef6a2a"/>
<path d="M27.500 1052.500q4 2 8-.5l-1.200 7.300q-4 2.200-7.800.2z" fill="#8cc43c"/>
<path d="M17 1060.500q4-2 7.500-.2l-1.200 7q-3.500-1.800-7.300.3z" fill="#3a9ae8"/>
<path d="M26 1060.500q4 2 8-.3l-1.200 7.300q-4 2.200-7.800.2z" fill="#f8c820"/>
<!-- IE -->
<circle cx="89" cy="1061" r="11.500" fill="#2f8fe0"/><circle cx="89" cy="1061" r="11.500" fill="none" stroke="#1a5cb0" stroke-width="1"/>
<path d="M80.500 1062.500h17q.5-8-8-9-8.500 1-9 9.500 1.500 7.500 9 7.500 6 0 8-5h-5q-1 2-3.500 2-3.500-.5-3.500-5z" fill="#eaf6ff"/><path d="M85 1059.500q.5-3.500 4-3.500t4 3.500z" fill="#2f8fe0"/>
<path d="M75 1074q-4-6 8-17 12-11 20-9 4 1.500 0 8" fill="none" stroke="#f0c020" stroke-width="2.600"/>
<!-- explorer -->
<path d="M136 1050h9l2 2h17v20h-28z" fill="#f3da7a" stroke="#c9a83a" stroke-width="1"/>
<rect x="139" y="1049" width="4" height="2.500" fill="#3aa83a"/><rect x="147" y="1051" width="4" height="2.500" fill="#d84a2a"/><rect x="155" y="1052.500" width="4" height="2.500" fill="#3a8ad8"/>
<path d="M136 1056h28v16h-28z" fill="#f9e9a2" stroke="#d4b54a" stroke-width=".8"/>
<path d="M140 1063h20l3 6v6h-26v-6z" fill="#9fcaf0" stroke="#5a94c8" stroke-width=".8"/><rect x="144" y="1069" width="12" height="6" fill="#e8f4ff" stroke="#5a94c8" stroke-width=".6"/>
<!-- WMP -->
<rect x="200" y="1047" width="25" height="25" rx="2" fill="#8fb8e8" stroke="#5a88c8" stroke-width=".8"/><rect x="198" y="1046" width="18" height="26" fill="#a8c8f0" opacity=".7"/>
<circle cx="210" cy="1060" r="9.500" fill="#f07818" stroke="#c85808" stroke-width=".8"/><circle cx="210" cy="1060" r="6.500" fill="#fbe8d8"/><path d="M207 1054.500l8 5.500-8 5.500z" fill="#f07818"/>
<!-- Opera -->
<ellipse cx="275" cy="1060" rx="13.500" ry="15.500" fill="#e8202a"/><ellipse cx="275" cy="1060" rx="13.500" ry="15.500" fill="none" stroke="#f77" stroke-width="1" opacity=".7"/>
<ellipse cx="275" cy="1060" rx="5.200" ry="11.500" fill="#3a72c8"/><ellipse cx="275" cy="1060" rx="5.200" ry="11.500" fill="none" stroke="#a01018" stroke-width="1"/>
<!-- kompas other (purple) -->
<rect x="321" y="1044" width="31.500" height="32" fill="#2a08a0"/>
<path d="M322 1046l20 22M325.500 1045l19.500 21M322.500 1054l15 16.500q3 2.500 5 0 2-2-.5-4.500l-15-16" stroke="#fff" stroke-width="1.500" fill="none"/>
<path d="M341 1070l6-6 4.500 5.500-6.500 5z" fill="#f0a020"/>
<!-- KOMPAS active -->
<circle cx="399.500" cy="1060" r="13.500" fill="none" stroke="#3a8ad8" stroke-width="3.600"/>
<path d="M394.500 1050.500v20M395 1061l9.500-10.500M398.500 1057l11.500 14" stroke="#3a8ad8" stroke-width="3.200" fill="none"/>
<!-- tray -->
<circle cx="1482" cy="1058" r="7.500" fill="url(#gHelp)" stroke="#dfe4ff" stroke-width="1.200"/><text x="1478.600" y="1062.500" font-size="12" font-weight="bold" font-family="Liberation Sans" fill="#fff">?</text>
<rect x="1502.500" y="1050.500" width="5" height="3" fill="none" stroke="#fff" stroke-width="1"/><rect x="1500.500" y="1052.500" width="5" height="3" fill="#183f7e" stroke="#fff" stroke-width="1"/><path d="M1500.500 1062h6l-3 3.500z" fill="#fff"/>
<circle cx="1526" cy="1061" r="7.500" fill="#d8a848"/><path d="M1519 1060q7-5 14 0-7 6-14 0z" fill="#4a9ae0"/><path d="M1521 1057l4-3 1 4zM1527 1054l4 1-3 3z" fill="#e84a2a" opacity=".9"/><path d="M1527 1060h5v6h-5z" fill="#2aa83a" stroke="#fff" stroke-width=".6"/><path d="M1529.500 1061v3.500M1528 1063l1.500 2 1.500-2" stroke="#fff" stroke-width=".9" fill="none"/>
<path d="M1543 1056q7-6 13 2 1 7-5 9-8-1-8-11z" fill="#7ac828"/><path d="M1546 1061l3 3 5-6" stroke="#fff" stroke-width="1.800" fill="none"/>
<circle cx="1574" cy="1061" r="8" fill="#e8f0f8" stroke="#9ab" stroke-width=".8"/><circle cx="1574" cy="1061" r="6" fill="#2a7ad0"/><path d="M1574 1056.500v6M1571 1060.500l3 3.500 3-3.500M1570.500 1065.500h7" stroke="#fff" stroke-width="1.500" fill="none"/>
<rect x="1589.500" y="1053.500" width="15" height="14" fill="#e8e4e0" stroke="#7a7a7a" stroke-width=".8"/><rect x="1591" y="1056" width="10" height="3" fill="#333"/><rect x="1590" y="1062" width="14" height="2.500" fill="#c83a3a"/><rect x="1601" y="1056" width="3" height="5" fill="#fff" stroke="#555" stroke-width=".5"/>
<rect x="1614" y="1053" width="16" height="16" fill="#f0a848"/><circle cx="1621.500" cy="1060.500" r="5" fill="none" stroke="#111" stroke-width="2.400"/><circle cx="1626.500" cy="1065.500" r="3.500" fill="#2aa83a"/><path d="M1625 1065.500l1.200 1.500 2-2.500" stroke="#fff" stroke-width="1" fill="none"/>
<circle cx="1645" cy="1061" r="7.500" fill="#1b2838"/><circle cx="1647.500" cy="1058.500" r="3" fill="none" stroke="#dfe6ee" stroke-width="1.400"/><path d="M1638 1061l5 2.500 3-3" stroke="#dfe6ee" stroke-width="2" fill="none"/><circle cx="1642.500" cy="1064" r="2" fill="#dfe6ee"/>
<rect x="1665.500" y="1056.500" width="11" height="8" fill="#1a3a70" stroke="#fff" stroke-width="1.400"/><path d="M1667 1068.500h8M1671 1065v3.500" stroke="#fff" stroke-width="1.400"/><rect x="1662.500" y="1052.500" width="4" height="6" fill="#fff"/><path d="M1664.500 1058.500v6h3" stroke="#fff" stroke-width="1.200" fill="none"/>
<rect x="1689.500" y="1052.500" width="5" height="5" fill="#c8c8c8" stroke="#888" stroke-width=".6"/><rect x="1688.500" y="1057.500" width="7" height="9" fill="#9a9a9a" stroke="#666" stroke-width=".6"/><circle cx="1697.500" cy="1065" r="4" fill="#2aa83a"/><path d="M1695.500 1065l1.500 1.800 2.500-3" stroke="#fff" stroke-width="1.100" fill="none"/>
<rect x="1711" y="1054" width="15" height="14" fill="#1a1a1a"/><path d="M1713 1061q5-6 11 0-5 5-11 0z" fill="none" stroke="#76b900" stroke-width="1.600"/><circle cx="1718.500" cy="1061" r="1.600" fill="#76b900"/><rect x="1723.500" y="1057" width="2" height="6" fill="#f0c020"/><rect x="1723.500" y="1064.500" width="2" height="2" fill="#f0c020"/>
<path d="M1733 1058h3l5.500-5v16l-5.500-5h-3z" fill="#e85a3a" stroke="#8a2a18" stroke-width=".6"/><path d="M1744 1053v16" stroke="#8a2a18" stroke-width="1.500" opacity=".7"/>
<path d="M1759.500 1051v19" stroke="#fff" stroke-width="1.600"/><path d="M1760.500 1052q4-2 7 0t7-.5v7q-3.500 2-7 .5t-7 0z" fill="#fff"/>
<path d="M1781 1058h3l4.500-4v14.500l-4.500-4h-3z" fill="#fff"/><path d="M1791 1057.500q2 3.500 0 7M1793.500 1055q3.500 6 0 12" stroke="#fff" stroke-width="1.100" fill="none"/><path d="M1796 1053q4.500 8 0 16" stroke="#fff" stroke-width="1" fill="none" opacity=".6"/>
<circle cx="1814" cy="1061" r="8" fill="#7ac030" stroke="#d8f0b8" stroke-width="1"/><path d="M1810 1056.500v6q0 3 3 3t3.500-2.500M1817 1056.500v9.500" stroke="#fff" stroke-width="2" fill="none"/>
</svg>
</body></html>
